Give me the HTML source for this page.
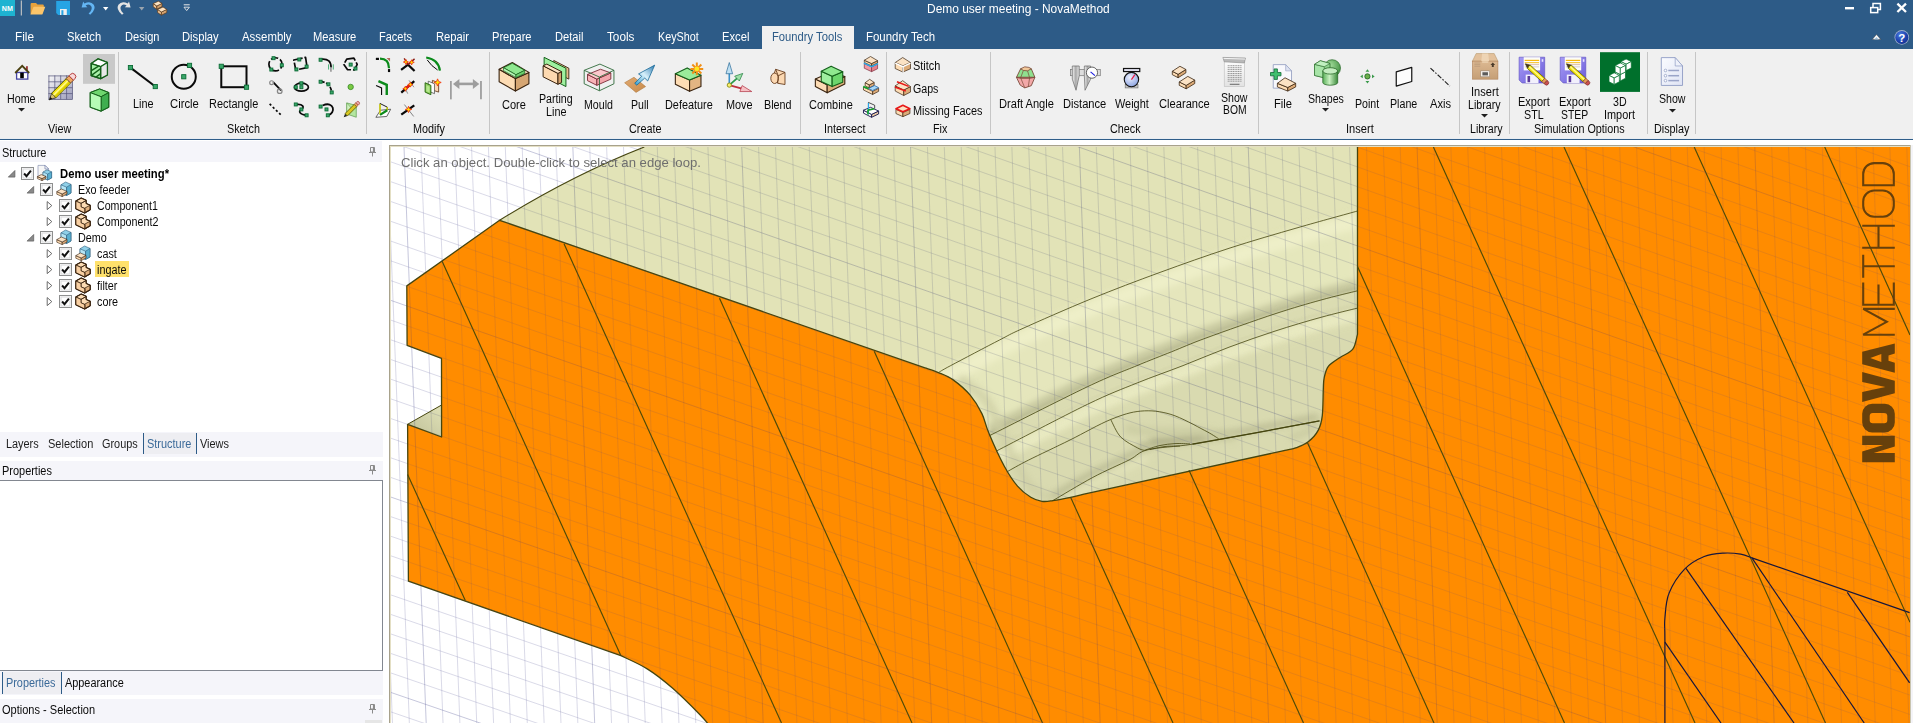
<!DOCTYPE html><html><head><meta charset="utf-8"><title>Demo user meeting - NovaMethod</title><style>
html,body{margin:0;padding:0;}
body{width:1913px;height:723px;overflow:hidden;background:#fff;position:relative;font-family:"Liberation Sans",sans-serif;font-size:12px;}
.t{position:absolute;white-space:nowrap;transform-origin:0 50%;display:block;}
.a{position:absolute;}
svg{position:absolute;overflow:visible;}
svg.vp{left:0;top:0;overflow:hidden;}
</style></head><body>
<div class="a" style="left:0;top:0;width:1913px;height:49px;background:#2d5b87"></div>
<div class="a" style="left:0;top:49px;width:1913px;height:89px;background:#f0f0f0"></div>
<div class="a" style="left:0;top:138px;width:1913px;height:1px;background:#e9edf2"></div>
<div class="a" style="left:0;top:139px;width:1913px;height:1px;background:#2f5d89"></div>
<span class="t" style="left:927.30px;top:1.00px;font-size:12px;line-height:16px;color:#fff;transform:scaleX(0.9962);">Demo user meeting - NovaMethod</span>
<span class="t" style="left:15.00px;top:29.40px;font-size:12px;line-height:16px;color:#fff;transform:scaleX(0.9822);">File</span>
<span class="t" style="left:66.90px;top:29.40px;font-size:12px;line-height:16px;color:#fff;transform:scaleX(0.9299);">Sketch</span>
<span class="t" style="left:124.50px;top:29.40px;font-size:12px;line-height:16px;color:#fff;transform:scaleX(0.9235);">Design</span>
<span class="t" style="left:182.30px;top:29.40px;font-size:12px;line-height:16px;color:#fff;transform:scaleX(0.9324);">Display</span>
<span class="t" style="left:241.50px;top:29.40px;font-size:12px;line-height:16px;color:#fff;transform:scaleX(0.9516);">Assembly</span>
<span class="t" style="left:313.00px;top:29.40px;font-size:12px;line-height:16px;color:#fff;transform:scaleX(0.9274);">Measure</span>
<span class="t" style="left:379.00px;top:29.40px;font-size:12px;line-height:16px;color:#fff;transform:scaleX(0.9167);">Facets</span>
<span class="t" style="left:436.00px;top:29.40px;font-size:12px;line-height:16px;color:#fff;transform:scaleX(0.9333);">Repair</span>
<span class="t" style="left:491.80px;top:29.40px;font-size:12px;line-height:16px;color:#fff;transform:scaleX(0.9253);">Prepare</span>
<span class="t" style="left:555.40px;top:29.40px;font-size:12px;line-height:16px;color:#fff;transform:scaleX(0.9255);">Detail</span>
<span class="t" style="left:607.20px;top:29.40px;font-size:12px;line-height:16px;color:#fff;transform:scaleX(0.9780);">Tools</span>
<span class="t" style="left:658.30px;top:29.40px;font-size:12px;line-height:16px;color:#fff;transform:scaleX(0.8998);">KeyShot</span>
<span class="t" style="left:722.20px;top:29.40px;font-size:12px;line-height:16px;color:#fff;transform:scaleX(0.9372);">Excel</span>
<span class="t" style="left:866.00px;top:29.40px;font-size:12px;line-height:16px;color:#fff;transform:scaleX(0.9521);">Foundry Tech</span>
<div class="a" style="left:762px;top:26px;width:92px;height:23px;background:#f0f0f0"></div>
<span class="t" style="left:772.00px;top:29.40px;font-size:12px;line-height:16px;color:#2d5b87;transform:scaleX(0.9356);">Foundry Tools</span>
<div class="a" style="left:118.0px;top:52px;width:1px;height:82px;background:#c6c6c6"></div>
<div class="a" style="left:366.0px;top:52px;width:1px;height:82px;background:#c6c6c6"></div>
<div class="a" style="left:489.0px;top:52px;width:1px;height:82px;background:#c6c6c6"></div>
<div class="a" style="left:800.0px;top:52px;width:1px;height:82px;background:#c6c6c6"></div>
<div class="a" style="left:886.0px;top:52px;width:1px;height:82px;background:#c6c6c6"></div>
<div class="a" style="left:989.9px;top:52px;width:1px;height:82px;background:#c6c6c6"></div>
<div class="a" style="left:1257.9px;top:52px;width:1px;height:82px;background:#c6c6c6"></div>
<div class="a" style="left:1458.7px;top:52px;width:1px;height:82px;background:#c6c6c6"></div>
<div class="a" style="left:1509.0px;top:52px;width:1px;height:82px;background:#c6c6c6"></div>
<div class="a" style="left:1647.1px;top:52px;width:1px;height:82px;background:#c6c6c6"></div>
<div class="a" style="left:1694.8px;top:52px;width:1px;height:82px;background:#c6c6c6"></div>
<span class="t" style="left:47.99px;top:121.00px;font-size:12px;line-height:16px;color:#0a0a0a;transform:scaleX(0.9000);">View</span>
<span class="t" style="left:227.10px;top:121.00px;font-size:12px;line-height:16px;color:#0a0a0a;transform:scaleX(0.9000);">Sketch</span>
<span class="t" style="left:413.30px;top:121.00px;font-size:12px;line-height:16px;color:#0a0a0a;transform:scaleX(0.9000);">Modify</span>
<span class="t" style="left:629.39px;top:121.00px;font-size:12px;line-height:16px;color:#0a0a0a;transform:scaleX(0.9000);">Create</span>
<span class="t" style="left:824.00px;top:121.00px;font-size:12px;line-height:16px;color:#0a0a0a;transform:scaleX(0.9000);">Intersect</span>
<span class="t" style="left:932.80px;top:121.00px;font-size:12px;line-height:16px;color:#0a0a0a;transform:scaleX(0.9000);">Fix</span>
<span class="t" style="left:1110.19px;top:121.00px;font-size:12px;line-height:16px;color:#0a0a0a;transform:scaleX(0.9000);">Check</span>
<span class="t" style="left:1345.85px;top:121.00px;font-size:12px;line-height:16px;color:#0a0a0a;transform:scaleX(0.9233);">Insert</span>
<span class="t" style="left:1469.95px;top:121.00px;font-size:12px;line-height:16px;color:#0a0a0a;transform:scaleX(0.8859);">Library</span>
<span class="t" style="left:1533.98px;top:121.00px;font-size:12px;line-height:16px;color:#0a0a0a;transform:scaleX(0.9000);">Simulation Options</span>
<span class="t" style="left:1654.29px;top:121.00px;font-size:12px;line-height:16px;color:#0a0a0a;transform:scaleX(0.9000);">Display</span>
<span class="t" style="left:7.15px;top:90.70px;font-size:12px;line-height:16px;color:#0a0a0a;transform:scaleX(0.8902);">Home</span>
<svg class="a" style="left:17.9px;top:108.0px" width="7" height="4" viewBox="0 0 7 4"><path d="M0,0H7L3.5,3.6Z" fill="#1e1e1e"/></svg>
<span class="t" style="left:132.95px;top:95.70px;font-size:12px;line-height:16px;color:#0a0a0a;transform:scaleX(0.9036);">Line</span>
<span class="t" style="left:169.90px;top:95.70px;font-size:12px;line-height:16px;color:#0a0a0a;transform:scaleX(0.9385);">Circle</span>
<span class="t" style="left:209.25px;top:95.70px;font-size:12px;line-height:16px;color:#0a0a0a;transform:scaleX(0.9124);">Rectangle</span>
<span class="t" style="left:501.85px;top:96.70px;font-size:12px;line-height:16px;color:#0a0a0a;transform:scaleX(0.9187);">Core</span>
<span class="t" style="left:584.30px;top:96.70px;font-size:12px;line-height:16px;color:#0a0a0a;transform:scaleX(0.8872);">Mould</span>
<span class="t" style="left:631.10px;top:96.70px;font-size:12px;line-height:16px;color:#0a0a0a;transform:scaleX(0.8793);">Pull</span>
<span class="t" style="left:665.25px;top:96.70px;font-size:12px;line-height:16px;color:#0a0a0a;transform:scaleX(0.9053);">Defeature</span>
<span class="t" style="left:726.00px;top:96.70px;font-size:12px;line-height:16px;color:#0a0a0a;transform:scaleX(0.9065);">Move</span>
<span class="t" style="left:764.05px;top:96.70px;font-size:12px;line-height:16px;color:#0a0a0a;transform:scaleX(0.8961);">Blend</span>
<span class="t" style="left:808.70px;top:96.70px;font-size:12px;line-height:16px;color:#0a0a0a;transform:scaleX(0.9119);">Combine</span>
<span class="t" style="left:539.45px;top:91.30px;font-size:12px;line-height:16px;color:#0a0a0a;transform:scaleX(0.8865);">Parting</span>
<span class="t" style="left:546.05px;top:103.90px;font-size:12px;line-height:16px;color:#0a0a0a;transform:scaleX(0.9036);">Line</span>
<span class="t" style="left:913.30px;top:57.60px;font-size:12px;line-height:16px;color:#0a0a0a;transform:scaleX(0.9100);">Stitch</span>
<span class="t" style="left:913.30px;top:80.70px;font-size:12px;line-height:16px;color:#0a0a0a;transform:scaleX(0.8859);">Gaps</span>
<span class="t" style="left:913.30px;top:103.40px;font-size:12px;line-height:16px;color:#0a0a0a;transform:scaleX(0.9063);">Missing Faces</span>
<span class="t" style="left:998.75px;top:95.70px;font-size:12px;line-height:16px;color:#0a0a0a;transform:scaleX(0.9249);">Draft Angle</span>
<span class="t" style="left:1063.05px;top:95.70px;font-size:12px;line-height:16px;color:#0a0a0a;transform:scaleX(0.9274);">Distance</span>
<span class="t" style="left:1115.00px;top:95.70px;font-size:12px;line-height:16px;color:#0a0a0a;transform:scaleX(0.9104);">Weight</span>
<span class="t" style="left:1159.00px;top:95.70px;font-size:12px;line-height:16px;color:#0a0a0a;transform:scaleX(0.9286);">Clearance</span>
<span class="t" style="left:1274.40px;top:95.70px;font-size:12px;line-height:16px;color:#0a0a0a;transform:scaleX(0.9305);">File</span>
<span class="t" style="left:1355.30px;top:95.70px;font-size:12px;line-height:16px;color:#0a0a0a;transform:scaleX(0.8850);">Point</span>
<span class="t" style="left:1389.95px;top:95.70px;font-size:12px;line-height:16px;color:#0a0a0a;transform:scaleX(0.8896);">Plane</span>
<span class="t" style="left:1429.50px;top:95.70px;font-size:12px;line-height:16px;color:#0a0a0a;transform:scaleX(0.9263);">Axis</span>
<span class="t" style="left:1221.05px;top:90.00px;font-size:12px;line-height:16px;color:#0a0a0a;transform:scaleX(0.8829);">Show</span>
<span class="t" style="left:1222.55px;top:102.40px;font-size:12px;line-height:16px;color:#0a0a0a;transform:scaleX(0.8599);">BOM</span>
<span class="t" style="left:1307.95px;top:90.70px;font-size:12px;line-height:16px;color:#0a0a0a;transform:scaleX(0.8823);">Shapes</span>
<svg class="a" style="left:1322.4px;top:108.0px" width="7" height="4" viewBox="0 0 7 4"><path d="M0,0H7L3.5,3.6Z" fill="#1e1e1e"/></svg>
<span class="t" style="left:1470.65px;top:83.70px;font-size:12px;line-height:16px;color:#0a0a0a;transform:scaleX(0.9233);">Insert</span>
<span class="t" style="left:1468.25px;top:96.70px;font-size:12px;line-height:16px;color:#0a0a0a;transform:scaleX(0.8859);">Library</span>
<svg class="a" style="left:1481.0px;top:114.0px" width="7" height="4" viewBox="0 0 7 4"><path d="M0,0H7L3.5,3.6Z" fill="#1e1e1e"/></svg>
<span class="t" style="left:1518.00px;top:94.30px;font-size:12px;line-height:16px;color:#0a0a0a;transform:scaleX(0.9172);">Export</span>
<span class="t" style="left:1524.10px;top:106.70px;font-size:12px;line-height:16px;color:#0a0a0a;transform:scaleX(0.8909);">STL</span>
<span class="t" style="left:1559.00px;top:94.30px;font-size:12px;line-height:16px;color:#0a0a0a;transform:scaleX(0.9172);">Export</span>
<span class="t" style="left:1561.35px;top:106.70px;font-size:12px;line-height:16px;color:#0a0a0a;transform:scaleX(0.8650);">STEP</span>
<span class="t" style="left:1612.90px;top:94.30px;font-size:12px;line-height:16px;color:#0a0a0a;transform:scaleX(0.8864);">3D</span>
<span class="t" style="left:1604.25px;top:106.70px;font-size:12px;line-height:16px;color:#0a0a0a;transform:scaleX(0.9088);">Import</span>
<span class="t" style="left:1658.75px;top:90.70px;font-size:12px;line-height:16px;color:#0a0a0a;transform:scaleX(0.8829);">Show</span>
<svg class="a" style="left:1668.5px;top:108.5px" width="7" height="4" viewBox="0 0 7 4"><path d="M0,0H7L3.5,3.6Z" fill="#1e1e1e"/></svg>
<div class="a" style="left:0;top:141px;width:382px;height:21px;background:#f5f5fa"></div>
<span class="t" style="left:1.80px;top:144.80px;font-size:12px;line-height:16px;color:#0a0a0a;transform:scaleX(0.9122);">Structure</span>
<svg class="a" style="left:367.9px;top:146.5px" width="9" height="10" viewBox="0 0 9 10"><path d="M2.5,0.5H6.5V5H2.5Z M1,5.5H8 M4.5,5.5V9.5" fill="none" stroke="#8a8a8a" stroke-width="1"/><path d="M5.5,0.5V5" stroke="#8a8a8a" stroke-width="1.2"/></svg>
<div class="a" style="left:0;top:432px;width:383px;height:25px;background:#f5f5fa"></div>
<div class="a" style="left:143px;top:433px;width:52px;height:21px;background:#eeeef2;border-left:1px solid #2d5b87;border-right:1px solid #2d5b87;box-sizing:content-box"></div>
<span class="t" style="left:6.30px;top:435.80px;font-size:12px;line-height:16px;color:#1e1e1e;transform:scaleX(0.9079);">Layers</span>
<span class="t" style="left:48.20px;top:435.80px;font-size:12px;line-height:16px;color:#1e1e1e;transform:scaleX(0.9178);">Selection</span>
<span class="t" style="left:102.30px;top:435.80px;font-size:12px;line-height:16px;color:#1e1e1e;transform:scaleX(0.9074);">Groups</span>
<span class="t" style="left:147.20px;top:435.80px;font-size:12px;line-height:16px;color:#3b6a99;transform:scaleX(0.9122);">Structure</span>
<span class="t" style="left:200.40px;top:435.80px;font-size:12px;line-height:16px;color:#1e1e1e;transform:scaleX(0.9120);">Views</span>
<div class="a" style="left:0;top:461px;width:383px;height:19px;background:#f5f5fa"></div>
<span class="t" style="left:1.80px;top:462.80px;font-size:12px;line-height:16px;color:#0a0a0a;transform:scaleX(0.9125);">Properties</span>
<svg class="a" style="left:367.9px;top:465.0px" width="9" height="10" viewBox="0 0 9 10"><path d="M2.5,0.5H6.5V5H2.5Z M1,5.5H8 M4.5,5.5V9.5" fill="none" stroke="#8a8a8a" stroke-width="1"/><path d="M5.5,0.5V5" stroke="#8a8a8a" stroke-width="1.2"/></svg>
<div class="a" style="left:-1px;top:480px;width:384px;height:191px;background:#fff;border:1px solid #828790;box-sizing:border-box"></div>
<div class="a" style="left:0;top:671px;width:383px;height:24px;background:#f5f5fa"></div>
<div class="a" style="left:2px;top:672px;width:58px;height:22px;background:#eeeef2;border-left:1px solid #2d5b87;border-right:1px solid #2d5b87;box-sizing:content-box"></div>
<span class="t" style="left:6.30px;top:675.30px;font-size:12px;line-height:16px;color:#3b6a99;transform:scaleX(0.9051);">Properties</span>
<span class="t" style="left:65.00px;top:675.30px;font-size:12px;line-height:16px;color:#0a0a0a;transform:scaleX(0.9072);">Appearance</span>
<div class="a" style="left:0;top:699px;width:383px;height:24px;background:#f5f5fa"></div>
<span class="t" style="left:1.80px;top:702.00px;font-size:12px;line-height:16px;color:#0a0a0a;transform:scaleX(0.9185);">Options - Selection</span>
<svg class="a" style="left:367.9px;top:703.5px" width="9" height="10" viewBox="0 0 9 10"><path d="M2.5,0.5H6.5V5H2.5Z M1,5.5H8 M4.5,5.5V9.5" fill="none" stroke="#8a8a8a" stroke-width="1"/><path d="M5.5,0.5V5" stroke="#8a8a8a" stroke-width="1.2"/></svg>
<div class="a" style="left:365px;top:720px;width:17px;height:3px;background:#e6e6e6"></div>
<span class="t" style="left:59.50px;top:165.80px;font-size:12px;line-height:16px;color:#000;font-weight:bold;transform:scaleX(0.9395);">Demo user meeting*</span>
<span class="t" style="left:78.30px;top:181.80px;font-size:12px;line-height:16px;color:#0a0a0a;transform:scaleX(0.8963);">Exo feeder</span>
<span class="t" style="left:97.00px;top:197.80px;font-size:12px;line-height:16px;color:#0a0a0a;transform:scaleX(0.8850);">Component1</span>
<span class="t" style="left:97.00px;top:213.80px;font-size:12px;line-height:16px;color:#0a0a0a;transform:scaleX(0.8937);">Component2</span>
<span class="t" style="left:78.30px;top:229.80px;font-size:12px;line-height:16px;color:#0a0a0a;transform:scaleX(0.9000);">Demo</span>
<span class="t" style="left:97.00px;top:245.80px;font-size:12px;line-height:16px;color:#0a0a0a;transform:scaleX(0.9000);">cast</span>
<div class="a" style="left:95px;top:261px;width:34px;height:16px;background:#ffe16b"></div>
<span class="t" style="left:97.00px;top:261.80px;font-size:12px;line-height:16px;color:#0a0a0a;transform:scaleX(0.9000);">ingate</span>
<span class="t" style="left:97.00px;top:277.80px;font-size:12px;line-height:16px;color:#0a0a0a;transform:scaleX(0.9000);">filter</span>
<span class="t" style="left:97.00px;top:293.80px;font-size:12px;line-height:16px;color:#0a0a0a;transform:scaleX(0.9000);">core</span>
<svg class="vp" width="1913" height="723" viewBox="0 0 1913 723"><defs><clipPath id="vc"><rect x="391" y="147" width="1519" height="576"/></clipPath><clipPath id="bc"><path d="M499.6,220.3 Q572.85,174.95 644.3,147 L644.3,140 L1358.5,140 L1358.5,520 L900,520 Z"/></clipPath><clipPath id="oc"><path d="M499.6,220.3 L406.8,285.9 L407.1,345.3 L441.5,358.4 L441.6,437 L407.6,424.3 L408.4,581.1 L620.9,655.7 C625.4,657.9 639.0,663.7 647.6,669.1 C656.2,674.5 664.0,680.7 672.7,688.3 C681.4,695.9 694.0,708.6 700.0,714.7 C706.0,720.8 707.5,723.3 709.0,725.0 L1915,725 L1915,140 L1357.5,140 L1357.5,334.3 C1356.7,336.8 1355.7,345.3 1352.8,349.2 C1349.9,353.1 1344.1,354.7 1340.1,357.5 C1336.0,360.3 1331.2,362.8 1328.5,366.2 C1325.8,369.6 1325.1,373.9 1324.2,377.8 C1323.3,381.7 1323.6,383.2 1323.3,389.5 C1323.0,395.8 1323.1,408.8 1322.3,415.6 C1321.5,422.4 1320.6,425.7 1318.3,430.1 C1316.0,434.5 1311.8,438.9 1308.2,441.8 C1304.6,444.7 1300.6,446.1 1296.6,447.6 C1292.6,449.1 1286.1,450.1 1284.0,450.6 L1084.0,494.2 C1081.8,494.7 1075.8,496.2 1070.6,497.3 C1065.4,498.4 1057.7,499.9 1052.9,500.6 C1048.1,501.3 1045.6,501.9 1041.9,501.3 C1038.2,500.8 1034.9,499.8 1030.8,497.3 C1026.7,494.8 1021.9,491.4 1017.5,486.2 C1013.1,481.0 1009.1,475.1 1004.3,466.3 C999.5,457.5 992.5,441.9 988.8,433.1 C985.1,424.3 985.0,419.9 981.9,413.6 C978.8,407.3 974.9,400.8 970.2,395.2 C965.5,389.6 958.8,383.9 953.5,380.1 C948.2,376.3 943.1,374.6 938.4,372.6 C933.6,370.6 927.2,368.7 925.0,367.9 Z"/></clipPath><clipPath id="bc2"><path d="M499.6,220.3 Q572.85,174.95 644.3,147 L644.3,140 L1358.5,140 L1358.5,520 L900,520 Z"/><path d="M407.6,424.3 L441.6,405 L441.6,437 Z"/></clipPath><filter id="b6" filterUnits="userSpaceOnUse" x="380" y="140" width="1540" height="590"><feGaussianBlur stdDeviation="6"/></filter><filter id="b2" filterUnits="userSpaceOnUse" x="380" y="140" width="1540" height="590"><feGaussianBlur stdDeviation="1.8"/></filter><filter id="b3" filterUnits="userSpaceOnUse" x="380" y="140" width="1540" height="590"><feGaussianBlur stdDeviation="3.2"/></filter><filter id="b10" filterUnits="userSpaceOnUse" x="380" y="140" width="1540" height="590"><feGaussianBlur stdDeviation="10"/></filter></defs><rect x="389.5" y="145.5" width="1521" height="580" fill="#fff" stroke="#a8a28c" stroke-width="1"/><rect x="390.5" y="146.5" width="1519" height="580" fill="none" stroke="#e4dfc4" stroke-width="1"/><g clip-path="url(#vc)"><path d="M353.35,147L375.63,723 M370.23,147L392.48,723 M387.12,147L409.33,723 M420.88,147L443.03,723 M437.77,147L459.88,723 M454.65,147L476.72,723 M471.54,147L493.57,723 M488.43,147L510.42,723 M505.31,147L527.27,723 M522.20,147L544.12,723 M539.08,147L560.97,723 M555.97,147L577.82,723 M589.74,147L611.52,723 M606.62,147L628.37,723 M623.50,147L645.22,723 M640.39,147L662.07,723 M657.28,147L678.92,723 M674.16,147L695.77,723 M691.05,147L712.62,723 M707.93,147L729.47,723 M724.82,147L746.32,723 M758.59,147L780.02,723 M775.47,147L796.87,723 M792.36,147L813.72,723 M809.24,147L830.57,723 M826.12,147L847.42,723 M843.01,147L864.26,723 M859.89,147L881.11,723 M876.78,147L897.96,723 M893.66,147L914.81,723 M927.44,147L948.51,723 M944.32,147L965.36,723 M961.21,147L982.21,723 M978.09,147L999.06,723 M994.98,147L1015.91,723 M1011.86,147L1032.76,723 M1028.74,147L1049.61,723 M1045.63,147L1066.46,723 M1062.52,147L1083.31,723 M1096.29,147L1117.01,723 M1113.17,147L1133.86,723 M1130.06,147L1150.71,723 M1146.94,147L1167.56,723 M1163.83,147L1184.41,723 M1180.71,147L1201.26,723 M1197.60,147L1218.11,723 M1214.48,147L1234.96,723 M1231.37,147L1251.81,723 M1265.14,147L1285.50,723 M1282.02,147L1302.35,723 M1298.91,147L1319.20,723 M1315.79,147L1336.05,723 M1332.68,147L1352.90,723 M1349.56,147L1369.75,723 M1366.45,147L1386.60,723 M1383.33,147L1403.45,723 M1400.22,147L1420.30,723 M1433.99,147L1454.00,723 M1450.87,147L1470.85,723 M1467.76,147L1487.70,723 M1484.64,147L1504.55,723 M1501.53,147L1521.40,723 M1518.41,147L1538.25,723 M1535.30,147L1555.10,723 M1552.18,147L1571.95,723 M1569.07,147L1588.80,723 M1602.84,147L1622.50,723 M1619.72,147L1639.35,723 M1636.61,147L1656.20,723 M1653.49,147L1673.04,723 M1670.38,147L1689.89,723 M1687.26,147L1706.74,723 M1704.15,147L1723.59,723 M1721.03,147L1740.44,723 M1737.92,147L1757.29,723 M1771.69,147L1790.99,723 M1788.57,147L1807.84,723 M1805.46,147L1824.69,723 M1822.34,147L1841.54,723 M1839.23,147L1858.39,723 M1856.11,147L1875.24,723 M1873.00,147L1892.09,723 M1889.88,147L1908.94,723 M1906.77,147L1925.79,723 M1940.54,147L1959.49,723 M1957.42,147L1976.34,723 M391,-887.32L1910,-331.20 M391,-866.80L1910,-311.12 M391,-846.29L1910,-291.05 M391,-825.80L1910,-271.00 M391,-805.32L1910,-250.96 M391,-784.85L1910,-230.93 M391,-764.40L1910,-210.92 M391,-743.96L1910,-190.92 M391,-723.53L1910,-170.94 M391,-682.72L1910,-131.00 M391,-662.33L1910,-111.06 M391,-641.96L1910,-91.13 M391,-621.60L1910,-71.21 M391,-601.26L1910,-51.30 M391,-580.93L1910,-31.41 M391,-560.61L1910,-11.53 M391,-540.30L1910,8.33 M391,-520.01L1910,28.18 M391,-479.46L1910,67.85 M391,-459.21L1910,87.66 M391,-438.97L1910,107.46 M391,-418.75L1910,127.24 M391,-398.54L1910,147.01 M391,-378.34L1910,166.77 M391,-358.15L1910,186.51 M391,-337.98L1910,206.24 M391,-317.82L1910,225.96 M391,-277.55L1910,265.36 M391,-257.43L1910,285.03 M391,-237.33L1910,304.70 M391,-217.24L1910,324.35 M391,-197.16L1910,343.99 M391,-177.09L1910,363.61 M391,-157.04L1910,383.22 M391,-137.00L1910,402.82 M391,-116.98L1910,422.40 M391,-76.97L1910,461.53 M391,-56.99L1910,481.07 M391,-37.02L1910,500.60 M391,-17.06L1910,520.12 M391,2.88L1910,539.62 M391,22.81L1910,559.11 M391,42.73L1910,578.59 M391,62.63L1910,598.05 M391,82.52L1910,617.50 M391,122.26L1910,656.36 M391,142.11L1910,675.77 M391,161.95L1910,695.16 M391,181.77L1910,714.55 M391,201.58L1910,733.92 M391,221.38L1910,753.27 M391,241.16L1910,772.61 M391,260.93L1910,791.94 M391,280.69L1910,811.26 M391,320.16L1910,849.85 M391,339.88L1910,869.13 M391,359.58L1910,888.39 M391,379.27L1910,907.64 M391,398.94L1910,926.87 M391,418.60L1910,946.09 M391,438.25L1910,965.30 M391,457.89L1910,984.50 M391,477.51L1910,1003.68 M391,516.72L1910,1042.00 M391,536.30L1910,1061.14 M391,555.87L1910,1080.27 M391,575.42L1910,1099.38 M391,594.96L1910,1118.49 M391,614.49L1910,1137.57 M391,634.01L1910,1156.65 M391,653.51L1910,1175.71 M391,673.00L1910,1194.76 M391,711.93L1910,1232.81 M391,731.38L1910,1251.82 M391,750.81L1910,1270.81" fill="none" stroke="#7578aa" stroke-opacity="0.27" stroke-width="1"/><path d="M404.00,147L426.18,723 M572.85,147L594.67,723 M741.70,147L763.17,723 M910.55,147L931.66,723 M1079.40,147L1100.16,723 M1248.25,147L1268.65,723 M1417.10,147L1437.15,723 M1585.95,147L1605.65,723 M1754.80,147L1774.14,723 M1923.65,147L1942.64,723 M391,-907.85L1910,-351.29 M391,-703.12L1910,-150.96 M391,-499.73L1910,48.02 M391,-297.68L1910,245.67 M391,-96.97L1910,441.97 M391,102.40L1910,636.94 M391,300.43L1910,830.56 M391,497.12L1910,1022.85 M391,692.47L1910,1213.79" fill="none" stroke="#6a6ca4" stroke-opacity="0.38" stroke-width="1"/><path d="M499.6,220.3 Q572.85,174.95 644.3,147 L644.3,140 L1358.5,140 L1358.5,520 L900,520 Z" fill="#E2E3B7"/><linearGradient id="ng" gradientUnits="userSpaceOnUse" x1="441" y1="405" x2="415" y2="436"><stop offset="0" stop-color="#e0e1b8"/><stop offset="1" stop-color="#c2c39b"/></linearGradient><path d="M407.6,424.3 L441.6,405 L441.6,437 Z" fill="url(#ng)"/><g clip-path="url(#bc)"><polygon points="925.0,379.5 938.4,372.6 950.7,365.6 999.5,340.0 1022.0,328.8 1091.0,298.9 1160.0,272.4 1229.0,248.3 1298.0,227.6 1357.5,211.0 1357.5,290.8 1321.0,300.0 1275.0,313.8 1206.0,338.0 1171.5,351.8 1137.0,365.6 1087.3,386.8 989.4,435.7" fill="#e6e7bd" filter="url(#b3)" opacity="0.90"/><path d="M925.0,389.5 C927.2,388.4 934.1,384.9 938.4,382.6 C942.7,380.3 940.5,381.0 950.7,375.6 C960.9,370.2 987.6,356.1 999.5,350.0 C1011.4,343.9 1006.8,345.7 1022.0,338.8 C1037.2,331.9 1068.0,318.3 1091.0,308.9 C1114.0,299.5 1137.0,290.8 1160.0,282.4 C1183.0,274.0 1206.0,265.8 1229.0,258.3 C1252.0,250.8 1276.6,243.8 1298.0,237.6 C1319.4,231.4 1347.6,223.8 1357.5,221.0" fill="none" stroke="#eeefc8" stroke-width="15.0" filter="url(#b3)" opacity="1.00" stroke-linecap="butt"/><path d="M989.4,429.7 C1005.7,421.6 1062.7,392.5 1087.3,380.8 C1111.9,369.1 1123.0,365.4 1137.0,359.6 C1151.0,353.8 1160.0,350.4 1171.5,345.8 C1183.0,341.2 1188.8,338.3 1206.0,332.0 C1223.2,325.7 1255.8,314.1 1275.0,307.8 C1294.2,301.5 1307.2,297.8 1321.0,294.0 C1334.8,290.2 1351.4,286.3 1357.5,284.8" fill="none" stroke="#c6c79e" stroke-width="10.0" filter="url(#b3)" opacity="1.00" stroke-linecap="butt"/><path d="M989.4,433.2 C1005.7,425.1 1062.7,396.0 1087.3,384.3 C1111.9,372.6 1123.0,368.9 1137.0,363.1 C1151.0,357.3 1160.0,353.9 1171.5,349.3 C1183.0,344.7 1188.8,341.8 1206.0,335.5 C1223.2,329.2 1255.8,317.6 1275.0,311.3 C1294.2,305.0 1307.2,301.3 1321.0,297.5 C1334.8,293.7 1351.4,289.8 1357.5,288.3" fill="none" stroke="#babb93" stroke-width="4.2" filter="url(#b2)" opacity="0.95" stroke-linecap="butt"/><polygon points="989.4,435.7 1087.3,386.8 1137.0,365.6 1171.5,351.8 1206.0,338.0 1275.0,313.8 1321.0,300.0 1357.5,290.8 1357.5,308.1 1321.0,317.3 1275.0,331.1 1229.0,347.2 1183.0,365.6 1137.0,383.0 1087.3,404.4 996.1,451.2" fill="#dbdcb2" filter="url(#b2)" opacity="0.95"/><path d="M996.1,448.7 C1011.3,440.9 1063.8,413.3 1087.3,401.9 C1110.8,390.5 1121.0,387.0 1137.0,380.5 C1153.0,374.0 1167.7,369.1 1183.0,363.1 C1198.3,357.1 1213.7,350.4 1229.0,344.7 C1244.3,338.9 1259.7,333.6 1275.0,328.6 C1290.3,323.6 1307.2,318.6 1321.0,314.8 C1334.8,311.0 1351.4,307.1 1357.5,305.6" fill="none" stroke="#d0d1a7" stroke-width="3.5" filter="url(#b2)" opacity="0.80" stroke-linecap="butt"/><path d="M996.1,459.2 C1011.3,451.4 1063.8,423.8 1087.3,412.4 C1110.8,401.0 1121.0,397.5 1137.0,391.0 C1153.0,384.5 1167.7,379.6 1183.0,373.6 C1198.3,367.6 1213.7,360.9 1229.0,355.2 C1244.3,349.4 1259.7,344.1 1275.0,339.1 C1290.3,334.1 1307.2,329.1 1321.0,325.3 C1334.8,321.5 1351.4,317.6 1357.5,316.1" fill="none" stroke="#e9eac2" stroke-width="13.0" filter="url(#b3)" opacity="0.95" stroke-linecap="butt"/><polygon points="996.1,465.2 1087.3,418.4 1137.0,397.0 1183.0,379.6 1229.0,361.2 1275.0,345.1 1321.0,331.3 1357.5,322.1 1362.5,520.0 980.0,520.0" fill="#d8d9af" filter="url(#b3)" opacity="0.85"/><path d="M959.0,378.0 C963.5,381.7 979.2,391.7 986.0,400.0 C992.8,408.3 995.0,417.3 1000.0,428.0 C1005.0,438.7 1010.3,453.7 1016.0,464.0 C1021.7,474.3 1026.8,484.0 1034.0,490.0 C1041.2,496.0 1054.8,498.3 1059.0,500.0" fill="none" stroke="#cdcea4" stroke-width="9.0" filter="url(#b3)" opacity="0.75" stroke-linecap="butt"/><path d="M1140.0,446.0 C1144.2,445.5 1155.0,444.2 1165.0,443.0 C1175.0,441.8 1185.8,441.2 1200.0,439.0 C1214.2,436.8 1230.3,433.7 1250.0,430.0 C1269.7,426.3 1306.7,419.2 1318.0,417.0" fill="none" stroke="#b9ba92" stroke-width="6.0" filter="url(#b3)" opacity="0.95" stroke-linecap="butt"/><path d="M1150.0,441.0 C1154.2,440.7 1165.8,439.8 1175.0,439.0 C1184.2,438.2 1200.0,436.5 1205.0,436.0" fill="none" stroke="#a7a882" stroke-width="6.0" filter="url(#b3)" opacity="0.90" stroke-linecap="butt"/><path d="M1125.0,428.0 C1129.2,428.7 1137.5,431.3 1150.0,432.0 C1162.5,432.7 1185.8,431.0 1200.0,432.0 C1214.2,433.0 1229.2,437.0 1235.0,438.0" fill="none" stroke="#cbcca2" stroke-width="10.0" filter="url(#b3)" opacity="0.80" stroke-linecap="butt"/><path d="M1052.9,496.6 C1059.6,492.7 1080.1,480.2 1092.8,473.4 C1105.5,466.6 1119.8,460.6 1129.0,456.0 C1138.2,451.4 1144.9,447.4 1148.1,445.7" fill="none" stroke="#bcbd95" stroke-width="7.0" filter="url(#b3)" opacity="0.95" stroke-linecap="butt"/><path d="M1052.9,507.6 C1059.6,503.7 1080.1,491.2 1092.8,484.4 C1105.5,477.6 1119.8,471.6 1129.0,467.0 C1138.2,462.4 1144.9,458.4 1148.1,456.7" fill="none" stroke="#e2e3ba" stroke-width="8.0" filter="url(#b3)" opacity="0.80" stroke-linecap="butt"/><path d="M1290.0,438.0 C1293.3,436.7 1305.3,433.3 1310.0,430.0 C1314.7,426.7 1316.7,420.0 1318.0,418.0" fill="none" stroke="#c9caa0" stroke-width="8.0" filter="url(#b3)" opacity="0.80" stroke-linecap="butt"/></g><g clip-path="url(#bc2)"><path d="M353.35,147L375.63,723 M370.23,147L392.48,723 M387.12,147L409.33,723 M420.88,147L443.03,723 M437.77,147L459.88,723 M454.65,147L476.72,723 M471.54,147L493.57,723 M488.43,147L510.42,723 M505.31,147L527.27,723 M522.20,147L544.12,723 M539.08,147L560.97,723 M555.97,147L577.82,723 M589.74,147L611.52,723 M606.62,147L628.37,723 M623.50,147L645.22,723 M640.39,147L662.07,723 M657.28,147L678.92,723 M674.16,147L695.77,723 M691.05,147L712.62,723 M707.93,147L729.47,723 M724.82,147L746.32,723 M758.59,147L780.02,723 M775.47,147L796.87,723 M792.36,147L813.72,723 M809.24,147L830.57,723 M826.12,147L847.42,723 M843.01,147L864.26,723 M859.89,147L881.11,723 M876.78,147L897.96,723 M893.66,147L914.81,723 M927.44,147L948.51,723 M944.32,147L965.36,723 M961.21,147L982.21,723 M978.09,147L999.06,723 M994.98,147L1015.91,723 M1011.86,147L1032.76,723 M1028.74,147L1049.61,723 M1045.63,147L1066.46,723 M1062.52,147L1083.31,723 M1096.29,147L1117.01,723 M1113.17,147L1133.86,723 M1130.06,147L1150.71,723 M1146.94,147L1167.56,723 M1163.83,147L1184.41,723 M1180.71,147L1201.26,723 M1197.60,147L1218.11,723 M1214.48,147L1234.96,723 M1231.37,147L1251.81,723 M1265.14,147L1285.50,723 M1282.02,147L1302.35,723 M1298.91,147L1319.20,723 M1315.79,147L1336.05,723 M1332.68,147L1352.90,723 M1349.56,147L1369.75,723 M1366.45,147L1386.60,723 M1383.33,147L1403.45,723 M1400.22,147L1420.30,723 M1433.99,147L1454.00,723 M1450.87,147L1470.85,723 M1467.76,147L1487.70,723 M1484.64,147L1504.55,723 M1501.53,147L1521.40,723 M1518.41,147L1538.25,723 M1535.30,147L1555.10,723 M1552.18,147L1571.95,723 M1569.07,147L1588.80,723 M1602.84,147L1622.50,723 M1619.72,147L1639.35,723 M1636.61,147L1656.20,723 M1653.49,147L1673.04,723 M1670.38,147L1689.89,723 M1687.26,147L1706.74,723 M1704.15,147L1723.59,723 M1721.03,147L1740.44,723 M1737.92,147L1757.29,723 M1771.69,147L1790.99,723 M1788.57,147L1807.84,723 M1805.46,147L1824.69,723 M1822.34,147L1841.54,723 M1839.23,147L1858.39,723 M1856.11,147L1875.24,723 M1873.00,147L1892.09,723 M1889.88,147L1908.94,723 M1906.77,147L1925.79,723 M1940.54,147L1959.49,723 M1957.42,147L1976.34,723 M391,-887.32L1910,-331.20 M391,-866.80L1910,-311.12 M391,-846.29L1910,-291.05 M391,-825.80L1910,-271.00 M391,-805.32L1910,-250.96 M391,-784.85L1910,-230.93 M391,-764.40L1910,-210.92 M391,-743.96L1910,-190.92 M391,-723.53L1910,-170.94 M391,-682.72L1910,-131.00 M391,-662.33L1910,-111.06 M391,-641.96L1910,-91.13 M391,-621.60L1910,-71.21 M391,-601.26L1910,-51.30 M391,-580.93L1910,-31.41 M391,-560.61L1910,-11.53 M391,-540.30L1910,8.33 M391,-520.01L1910,28.18 M391,-479.46L1910,67.85 M391,-459.21L1910,87.66 M391,-438.97L1910,107.46 M391,-418.75L1910,127.24 M391,-398.54L1910,147.01 M391,-378.34L1910,166.77 M391,-358.15L1910,186.51 M391,-337.98L1910,206.24 M391,-317.82L1910,225.96 M391,-277.55L1910,265.36 M391,-257.43L1910,285.03 M391,-237.33L1910,304.70 M391,-217.24L1910,324.35 M391,-197.16L1910,343.99 M391,-177.09L1910,363.61 M391,-157.04L1910,383.22 M391,-137.00L1910,402.82 M391,-116.98L1910,422.40 M391,-76.97L1910,461.53 M391,-56.99L1910,481.07 M391,-37.02L1910,500.60 M391,-17.06L1910,520.12 M391,2.88L1910,539.62 M391,22.81L1910,559.11 M391,42.73L1910,578.59 M391,62.63L1910,598.05 M391,82.52L1910,617.50 M391,122.26L1910,656.36 M391,142.11L1910,675.77 M391,161.95L1910,695.16 M391,181.77L1910,714.55 M391,201.58L1910,733.92 M391,221.38L1910,753.27 M391,241.16L1910,772.61 M391,260.93L1910,791.94 M391,280.69L1910,811.26 M391,320.16L1910,849.85 M391,339.88L1910,869.13 M391,359.58L1910,888.39 M391,379.27L1910,907.64 M391,398.94L1910,926.87 M391,418.60L1910,946.09 M391,438.25L1910,965.30 M391,457.89L1910,984.50 M391,477.51L1910,1003.68 M391,516.72L1910,1042.00 M391,536.30L1910,1061.14 M391,555.87L1910,1080.27 M391,575.42L1910,1099.38 M391,594.96L1910,1118.49 M391,614.49L1910,1137.57 M391,634.01L1910,1156.65 M391,653.51L1910,1175.71 M391,673.00L1910,1194.76 M391,711.93L1910,1232.81 M391,731.38L1910,1251.82 M391,750.81L1910,1270.81" fill="none" stroke="#75768a" stroke-opacity="0.25" stroke-width="1"/><path d="M404.00,147L426.18,723 M572.85,147L594.67,723 M741.70,147L763.17,723 M910.55,147L931.66,723 M1079.40,147L1100.16,723 M1248.25,147L1268.65,723 M1417.10,147L1437.15,723 M1585.95,147L1605.65,723 M1754.80,147L1774.14,723 M1923.65,147L1942.64,723 M391,-907.85L1910,-351.29 M391,-703.12L1910,-150.96 M391,-499.73L1910,48.02 M391,-297.68L1910,245.67 M391,-96.97L1910,441.97 M391,102.40L1910,636.94 M391,300.43L1910,830.56 M391,497.12L1910,1022.85 M391,692.47L1910,1213.79" fill="none" stroke="#6a6c88" stroke-opacity="0.36" stroke-width="1"/></g><path d="M499.6,220.3 L406.8,285.9 L407.1,345.3 L441.5,358.4 L441.6,437 L407.6,424.3 L408.4,581.1 L620.9,655.7 C625.4,657.9 639.0,663.7 647.6,669.1 C656.2,674.5 664.0,680.7 672.7,688.3 C681.4,695.9 694.0,708.6 700.0,714.7 C706.0,720.8 707.5,723.3 709.0,725.0 L1915,725 L1915,140 L1357.5,140 L1357.5,334.3 C1356.7,336.8 1355.7,345.3 1352.8,349.2 C1349.9,353.1 1344.1,354.7 1340.1,357.5 C1336.0,360.3 1331.2,362.8 1328.5,366.2 C1325.8,369.6 1325.1,373.9 1324.2,377.8 C1323.3,381.7 1323.6,383.2 1323.3,389.5 C1323.0,395.8 1323.1,408.8 1322.3,415.6 C1321.5,422.4 1320.6,425.7 1318.3,430.1 C1316.0,434.5 1311.8,438.9 1308.2,441.8 C1304.6,444.7 1300.6,446.1 1296.6,447.6 C1292.6,449.1 1286.1,450.1 1284.0,450.6 L1084.0,494.2 C1081.8,494.7 1075.8,496.2 1070.6,497.3 C1065.4,498.4 1057.7,499.9 1052.9,500.6 C1048.1,501.3 1045.6,501.9 1041.9,501.3 C1038.2,500.8 1034.9,499.8 1030.8,497.3 C1026.7,494.8 1021.9,491.4 1017.5,486.2 C1013.1,481.0 1009.1,475.1 1004.3,466.3 C999.5,457.5 992.5,441.9 988.8,433.1 C985.1,424.3 985.0,419.9 981.9,413.6 C978.8,407.3 974.9,400.8 970.2,395.2 C965.5,389.6 958.8,383.9 953.5,380.1 C948.2,376.3 943.1,374.6 938.4,372.6 C933.6,370.6 927.2,368.7 925.0,367.9 Z" fill="#FF8C00"/><g fill="none" stroke="#45450f" stroke-width="0.8" clip-path="url(#bc)"><path d="M938.4,372.6 C940.5,371.4 940.5,371.0 950.7,365.6 C960.9,360.2 987.6,346.1 999.5,340.0 C1011.4,333.9 1006.8,335.7 1022.0,328.8 C1037.2,321.9 1068.0,308.3 1091.0,298.9 C1114.0,289.5 1137.0,280.8 1160.0,272.4 C1183.0,264.0 1206.0,255.8 1229.0,248.3 C1252.0,240.8 1276.6,233.8 1298.0,227.6 C1319.4,221.4 1347.6,213.8 1357.5,211.0"/><path d="M989.4,435.7 C1005.7,427.6 1062.7,398.5 1087.3,386.8 C1111.9,375.1 1123.0,371.4 1137.0,365.6 C1151.0,359.8 1160.0,356.4 1171.5,351.8 C1183.0,347.2 1188.8,344.3 1206.0,338.0 C1223.2,331.7 1255.8,320.1 1275.0,313.8 C1294.2,307.5 1307.2,303.8 1321.0,300.0 C1334.8,296.2 1351.4,292.3 1357.5,290.8"/><path d="M996.1,451.2 C1011.3,443.4 1063.8,415.8 1087.3,404.4 C1110.8,393.0 1121.0,389.5 1137.0,383.0 C1153.0,376.5 1167.7,371.6 1183.0,365.6 C1198.3,359.6 1213.7,352.9 1229.0,347.2 C1244.3,341.4 1259.7,336.1 1275.0,331.1 C1290.3,326.1 1307.2,321.1 1321.0,317.3 C1334.8,313.5 1351.4,309.6 1357.5,308.1"/><path d="M1007.5,471.5 C1011.0,469.6 1018.3,465.2 1028.7,460.0 C1039.1,454.8 1056.3,446.8 1070.0,440.0 C1083.7,433.2 1098.9,424.3 1110.7,419.5 C1122.5,414.7 1130.8,412.0 1140.8,411.1 C1150.8,410.2 1160.3,411.2 1170.9,414.4 C1181.5,417.6 1196.5,426.2 1204.4,430.3 C1212.4,434.4 1216.2,437.3 1218.6,438.7"/><path d="M1110.7,419.5 C1112.4,422.4 1116.2,432.3 1120.7,437.0 C1125.2,441.7 1133.6,445.7 1137.5,447.9 C1141.4,450.1 1143.1,450.0 1144.2,450.4"/><path d="M1052.9,500.6 C1059.6,496.7 1080.1,484.2 1092.8,477.4 C1105.5,470.6 1119.8,464.6 1129.0,460.0 C1138.2,455.4 1137.5,452.3 1148.1,449.7 C1158.7,447.1 1174.7,447.0 1192.4,444.2 C1210.1,441.4 1233.1,437.0 1254.3,433.1 C1275.5,429.2 1308.6,422.9 1319.5,420.9"/><path d="M1144.2,450.4 C1146.8,449.6 1154.9,446.6 1160.0,445.5 C1165.1,444.4 1170.0,443.9 1175.0,443.6 C1180.0,443.3 1187.5,443.8 1190.0,443.9"/><path d="M1150.0,449.5 C1152.5,449.0 1160.0,447.1 1165.0,446.5 C1170.0,445.9 1177.5,446.1 1180.0,446.0"/></g><path d="M1192.4,444.2 L1254.3,433.1 L1319.5,420.9" fill="none" stroke="#45450f" stroke-width="1.3" clip-path="url(#bc)"/><g fill="none" stroke="#4c4a08" stroke-width="1.15"><polyline points="407.6,474.5 465.3,600.4"/><polyline points="441.9,260.8 620.9,655.7"/><polyline points="564.0,243.7 781.5,723.0"/><polyline points="719.5,298.2 912.0,723.0"/><polyline points="874.2,351.2 1042.5,723.0"/><polyline points="1070.6,497.3 1173.0,723.0"/><polyline points="1189.0,470.3 1303.5,723.0"/><polyline points="1307.4,442.5 1434.0,723.0"/><polyline points="1357.5,266.5 1564.5,723.0"/><polyline points="1433.4,147.0 1695.0,723.0"/><polyline points="1564.0,147.0 1825.5,723.0"/><polyline points="1694.2,147.0 1910.0,622.3"/><polyline points="1824.7,147.0 1910.0,334.9"/></g><path d="M709.0,725.0 C707.5,723.3 706.0,720.8 700.0,714.7 C694.0,708.6 681.4,695.9 672.7,688.3 C664.0,680.7 656.2,674.5 647.6,669.1 C639.0,663.7 625.4,657.9 620.9,655.7 L408.4,581.1 L407.6,424.3 L441.6,437 L441.5,358.4 L407.1,345.3 L406.8,285.9 L499.6,220.3 L925.0,367.9 C927.2,368.7 933.6,370.6 938.4,372.6 C943.1,374.6 948.2,376.3 953.5,380.1 C958.8,383.9 965.5,389.6 970.2,395.2 C974.9,400.8 978.8,407.3 981.9,413.6 C985.0,419.9 985.1,424.3 988.8,433.1 C992.5,441.9 999.5,457.5 1004.3,466.3 C1009.1,475.1 1013.1,481.0 1017.5,486.2 C1021.9,491.4 1026.7,494.8 1030.8,497.3 C1034.9,499.8 1038.2,500.8 1041.9,501.3 C1045.6,501.9 1048.1,501.3 1052.9,500.6 C1057.7,499.9 1065.4,498.4 1070.6,497.3 C1075.8,496.2 1081.8,494.7 1084.0,494.2 L1284.0,450.6 C1286.1,450.1 1292.6,449.1 1296.6,447.6 C1300.6,446.1 1304.6,444.7 1308.2,441.8 C1311.8,438.9 1316.0,434.5 1318.3,430.1 C1320.6,425.7 1321.5,422.4 1322.3,415.6 C1323.1,408.8 1323.0,395.8 1323.3,389.5 C1323.6,383.2 1323.3,381.7 1324.2,377.8 C1325.1,373.9 1325.8,369.6 1328.5,366.2 C1331.2,362.8 1336.0,360.3 1340.1,357.5 C1344.1,354.7 1349.9,353.1 1352.8,349.2 C1355.7,345.3 1356.7,336.8 1357.5,334.3 L1357.5,140" fill="none" stroke="#45450f" stroke-width="1.3" stroke-linejoin="round"/><path d="M499.6,220.3 Q572.85,174.95 644.3,147" fill="none" stroke="#45450f" stroke-width="1.15"/><path d="M407.6,424.3 L441.6,405" fill="none" stroke="#45450f" stroke-width="1"/><g fill="none" stroke="#16163c" stroke-width="1.2"><path d="M1664.9,725.0 C1664.9,710.8 1664.9,657.8 1664.9,640.0 C1664.9,622.2 1664.2,626.0 1664.9,618.2 C1665.6,610.4 1665.8,601.2 1669.1,593.0 C1672.4,584.8 1678.8,575.2 1684.6,569.1 C1690.4,563.0 1697.7,559.2 1704.2,556.5 C1710.7,553.8 1717.7,553.5 1723.8,553.1 C1729.9,552.7 1736.0,553.4 1740.7,554.2 C1745.4,555.0 1750.0,557.3 1751.9,557.9 L1909.6,612.6"/><polyline points="1664.9,642.1 1721.0,723.0"/><polyline points="1686.0,568.3 1794.0,723.0"/><polyline points="1751.9,557.9 1864.2,723.0"/><polyline points="1847.3,592.4 1909.6,682.8"/></g><g clip-path="url(#oc)"><path d="M353.35,147L375.63,723 M370.23,147L392.48,723 M387.12,147L409.33,723 M420.88,147L443.03,723 M437.77,147L459.88,723 M454.65,147L476.72,723 M471.54,147L493.57,723 M488.43,147L510.42,723 M505.31,147L527.27,723 M522.20,147L544.12,723 M539.08,147L560.97,723 M555.97,147L577.82,723 M589.74,147L611.52,723 M606.62,147L628.37,723 M623.50,147L645.22,723 M640.39,147L662.07,723 M657.28,147L678.92,723 M674.16,147L695.77,723 M691.05,147L712.62,723 M707.93,147L729.47,723 M724.82,147L746.32,723 M758.59,147L780.02,723 M775.47,147L796.87,723 M792.36,147L813.72,723 M809.24,147L830.57,723 M826.12,147L847.42,723 M843.01,147L864.26,723 M859.89,147L881.11,723 M876.78,147L897.96,723 M893.66,147L914.81,723 M927.44,147L948.51,723 M944.32,147L965.36,723 M961.21,147L982.21,723 M978.09,147L999.06,723 M994.98,147L1015.91,723 M1011.86,147L1032.76,723 M1028.74,147L1049.61,723 M1045.63,147L1066.46,723 M1062.52,147L1083.31,723 M1096.29,147L1117.01,723 M1113.17,147L1133.86,723 M1130.06,147L1150.71,723 M1146.94,147L1167.56,723 M1163.83,147L1184.41,723 M1180.71,147L1201.26,723 M1197.60,147L1218.11,723 M1214.48,147L1234.96,723 M1231.37,147L1251.81,723 M1265.14,147L1285.50,723 M1282.02,147L1302.35,723 M1298.91,147L1319.20,723 M1315.79,147L1336.05,723 M1332.68,147L1352.90,723 M1349.56,147L1369.75,723 M1366.45,147L1386.60,723 M1383.33,147L1403.45,723 M1400.22,147L1420.30,723 M1433.99,147L1454.00,723 M1450.87,147L1470.85,723 M1467.76,147L1487.70,723 M1484.64,147L1504.55,723 M1501.53,147L1521.40,723 M1518.41,147L1538.25,723 M1535.30,147L1555.10,723 M1552.18,147L1571.95,723 M1569.07,147L1588.80,723 M1602.84,147L1622.50,723 M1619.72,147L1639.35,723 M1636.61,147L1656.20,723 M1653.49,147L1673.04,723 M1670.38,147L1689.89,723 M1687.26,147L1706.74,723 M1704.15,147L1723.59,723 M1721.03,147L1740.44,723 M1737.92,147L1757.29,723 M1771.69,147L1790.99,723 M1788.57,147L1807.84,723 M1805.46,147L1824.69,723 M1822.34,147L1841.54,723 M1839.23,147L1858.39,723 M1856.11,147L1875.24,723 M1873.00,147L1892.09,723 M1889.88,147L1908.94,723 M1906.77,147L1925.79,723 M1940.54,147L1959.49,723 M1957.42,147L1976.34,723 M391,-887.32L1910,-331.20 M391,-866.80L1910,-311.12 M391,-846.29L1910,-291.05 M391,-825.80L1910,-271.00 M391,-805.32L1910,-250.96 M391,-784.85L1910,-230.93 M391,-764.40L1910,-210.92 M391,-743.96L1910,-190.92 M391,-723.53L1910,-170.94 M391,-682.72L1910,-131.00 M391,-662.33L1910,-111.06 M391,-641.96L1910,-91.13 M391,-621.60L1910,-71.21 M391,-601.26L1910,-51.30 M391,-580.93L1910,-31.41 M391,-560.61L1910,-11.53 M391,-540.30L1910,8.33 M391,-520.01L1910,28.18 M391,-479.46L1910,67.85 M391,-459.21L1910,87.66 M391,-438.97L1910,107.46 M391,-418.75L1910,127.24 M391,-398.54L1910,147.01 M391,-378.34L1910,166.77 M391,-358.15L1910,186.51 M391,-337.98L1910,206.24 M391,-317.82L1910,225.96 M391,-277.55L1910,265.36 M391,-257.43L1910,285.03 M391,-237.33L1910,304.70 M391,-217.24L1910,324.35 M391,-197.16L1910,343.99 M391,-177.09L1910,363.61 M391,-157.04L1910,383.22 M391,-137.00L1910,402.82 M391,-116.98L1910,422.40 M391,-76.97L1910,461.53 M391,-56.99L1910,481.07 M391,-37.02L1910,500.60 M391,-17.06L1910,520.12 M391,2.88L1910,539.62 M391,22.81L1910,559.11 M391,42.73L1910,578.59 M391,62.63L1910,598.05 M391,82.52L1910,617.50 M391,122.26L1910,656.36 M391,142.11L1910,675.77 M391,161.95L1910,695.16 M391,181.77L1910,714.55 M391,201.58L1910,733.92 M391,221.38L1910,753.27 M391,241.16L1910,772.61 M391,260.93L1910,791.94 M391,280.69L1910,811.26 M391,320.16L1910,849.85 M391,339.88L1910,869.13 M391,359.58L1910,888.39 M391,379.27L1910,907.64 M391,398.94L1910,926.87 M391,418.60L1910,946.09 M391,438.25L1910,965.30 M391,457.89L1910,984.50 M391,477.51L1910,1003.68 M391,516.72L1910,1042.00 M391,536.30L1910,1061.14 M391,555.87L1910,1080.27 M391,575.42L1910,1099.38 M391,594.96L1910,1118.49 M391,614.49L1910,1137.57 M391,634.01L1910,1156.65 M391,653.51L1910,1175.71 M391,673.00L1910,1194.76 M391,711.93L1910,1232.81 M391,731.38L1910,1251.82 M391,750.81L1910,1270.81" fill="none" stroke="#785168" stroke-opacity="0.17" stroke-width="1"/><path d="M404.00,147L426.18,723 M572.85,147L594.67,723 M741.70,147L763.17,723 M910.55,147L931.66,723 M1079.40,147L1100.16,723 M1248.25,147L1268.65,723 M1417.10,147L1437.15,723 M1585.95,147L1605.65,723 M1754.80,147L1774.14,723 M1923.65,147L1942.64,723 M391,-907.85L1910,-351.29 M391,-703.12L1910,-150.96 M391,-499.73L1910,48.02 M391,-297.68L1910,245.67 M391,-96.97L1910,441.97 M391,102.40L1910,636.94 M391,300.43L1910,830.56 M391,497.12L1910,1022.85 M391,692.47L1910,1213.79" fill="none" stroke="#6a4560" stroke-opacity="0.25" stroke-width="1"/></g><g transform="translate(1894.8,462.3) rotate(-90)" fill="#5c3b0c" stroke="none" opacity="0.93"><polygon points="0.0,0.0 0.0,-32.6 10.7,-32.6 17.3,-11.5 17.3,-32.6 26.5,-32.6 26.5,0.0 15.8,0.0 9.2,-21.0 9.2,0.0"/><path fill-rule="evenodd" d="M29.8,-22.6 a10.0,10.0 0 0 1 10.0,-10.0 h8.8 a10.0,10.0 0 0 1 10.0,10.0 v12.6 a10.0,10.0 0 0 1 -10.0,10.0 h-8.8 a10.0,10.0 0 0 1 -10.0,-10.0 z M39.0,-22.1 a3,3 0 0 1 3,-3 h4.4 a3,3 0 0 1 3,3 v11.6 a3,3 0 0 1 -3,3 h-4.4 a3,3 0 0 1 -3,-3 z"/><polygon points="60.2,-32.6 70.4,-32.6 75.3,-9.5 80.2,-32.6 90.4,-32.6 81.6,0.0 69.0,0.0"/><path fill-rule="evenodd" d="M89.6,0 L98.0,-32.6 L110.5,-32.6 L118.9,0 L108.9,0 L106.9,-6.3 L101.6,-6.3 L99.6,0 Z M100.3,-13.5 L104.2,-24.5 L108.2,-13.5 Z"/></g><g transform="translate(1894.8,462.3) rotate(-90)" fill="none" stroke="#5c3b0c" stroke-width="2.1" opacity="0.93" stroke-linejoin="miter"><path d="M127.6,0 V-31.6 L140.5,-8.0 L153.4,-31.6 V0"/><path d="M179.7,-1 H157.5 V-31.6 H179.7 M157.5,-16.3 H177.7"/><path d="M184.5,-31.6 H207.5 M196.0,-31.6 V0"/><path d="M214.6,0 V-32.6 M236.6,0 V-32.6 M214.6,-16.3 H236.6"/><rect x="245.6" y="-31.6" width="26.2" height="30.6" rx="11.0" ry="11.0"/><path d="M277.0,-1 V-31.6 H288.2 a11.0,11.0 0 0 1 11.0,11.0 V-12.0 a11.0,11.0 0 0 1 -11.0,11.0 Z"/></g></g><rect x="1910" y="145" width="1" height="580" fill="#c8c4b0"/><rect x="1911" y="145" width="2" height="580" fill="#f4f4f8"/></svg>
<span class="t" style="left:401.20px;top:153.80px;font-size:13px;line-height:17px;color:#6e6e6e;transform:scaleX(1.0098);">Click an object. Double-click to select an edge loop.</span>
<svg class="a" style="left:0;top:0" width="1913" height="723" viewBox="0 0 1913 723"><rect x="0.00" y="0.00" width="15.00" height="16.00" fill="#1eb3d1" /><text x="7.3" y="10.8" font-family="Liberation Sans" font-weight="bold" font-size="7.6" fill="#fff" text-anchor="middle" textLength="11" lengthAdjust="spacingAndGlyphs">NM</text><rect x="20.80" y="0.50" width="1.00" height="15.00" fill="#d8d3cd" /><path d="M30.6,14.4 V4.2 q0,-1.2 1.2,-1.2 h4.2 l1.5,1.6 h5.3 q1,0 1,1 V7" fill="#e7a23c" /><path d="M30.6,14.6 L33.2,7.6 q0.3,-0.8 1.2,-0.8 H45.3 L42.6,14 q-0.2,0.6 -1,0.6 Z" fill="#fbc56a" /><path d="M56.2,1 H70 V15 H58.2 L56.2,13 Z" fill="#27a4e4" /><rect x="60.00" y="9.00" width="6.80" height="6.00" fill="#efefef" /><rect x="61.40" y="10.20" width="2.00" height="4.80" fill="#27a4e4" /><path d="M83.2,1.6 L81.6,7.6 L87.4,7.2 L85.6,5.6 Q89.2,3.2 91.4,6.4 Q92.8,9.4 88.6,13.6 L90.2,14.8 Q96.6,9.2 93.8,4.8 Q90.4,0.2 84.4,3.6 Z" fill="#64b6f4" /><path d="M103,7 H108.4 L105.7,10.4 Z" fill="#fff" /><path d="M129,1.6 L130.6,7.6 L124.8,7.2 L126.6,5.6 Q123,3.2 120.8,6.4 Q119.4,9.4 123.6,13.6 L122,14.8 Q115.6,9.2 118.4,4.8 Q121.8,0.2 127.8,3.6 Z" fill="#e4e4e4" /><path d="M139,7 H144.4 L141.7,10.4 Z" fill="#9aa4ae" /><polygon points="153.20,3.60 156.80,6.00 156.80,9.20 153.20,6.80" fill="#eec395" stroke="#5a3a1a" stroke-width="0.7" stroke-linejoin="round" /><polygon points="156.80,6.00 162.00,3.40 162.00,6.60 156.80,9.20" fill="#d3a26f" stroke="#5a3a1a" stroke-width="0.7" stroke-linejoin="round" /><polygon points="153.20,3.60 158.40,1.20 162.00,3.40 156.80,6.00" fill="#fde3c2" stroke="#5a3a1a" stroke-width="0.7" stroke-linejoin="round" /><polygon points="157.60,9.40 161.40,12.00 161.40,15.20 157.60,12.60" fill="#eec395" stroke="#5a3a1a" stroke-width="0.7" stroke-linejoin="round" /><polygon points="161.40,12.00 166.80,9.40 166.80,12.60 161.40,15.20" fill="#d3a26f" stroke="#5a3a1a" stroke-width="0.7" stroke-linejoin="round" /><polygon points="157.60,9.40 163.00,7.00 166.80,9.40 161.40,12.00" fill="#fde3c2" stroke="#5a3a1a" stroke-width="0.7" stroke-linejoin="round" /><rect x="183.70" y="4.30" width="6.00" height="1.00" fill="#e8e8e8" /><path d="M184,7.2 H189.4 L186.7,10.6 Z" fill="none" stroke="#e8e8e8" stroke-width="0.9" /><rect x="1845.00" y="7.00" width="9.00" height="2.40" fill="#fff" /><path d="M1873,7 V3.6 H1880.4 V9.4 H1878" fill="none" stroke="#fff" stroke-width="1.5" /><rect x="1870.70" y="7.60" width="7.00" height="5.00" fill="none" stroke="#fff" stroke-width="1.5" /><path d="M1897.4,3.6 L1906,12 M1906,3.6 L1897.4,12" fill="none" stroke="#fff" stroke-width="2.3" /><path d="M1872.2,39.4 L1876.5,34.6 L1880.8,39.4 Z" fill="#fff" stroke="#3a3a3a" stroke-width="0.5" /><path d="M1874.2,39.4 L1876.5,36.9 L1878.8,39.4 Z" fill="#9fc0dc" /><defs><radialGradient id="hg" cx="0.38" cy="0.3" r="0.85"><stop offset="0" stop-color="#4a7ae0"/><stop offset="0.55" stop-color="#1e44b0"/><stop offset="1" stop-color="#122c88"/></radialGradient></defs><circle cx="1901.80" cy="37.40" r="7.30" fill="#9fb0cc" /><circle cx="1901.80" cy="37.40" r="6.50" fill="url(#hg)" /><text x="1901.8" y="41.7" font-family="Liberation Sans" font-weight="bold" font-size="11.5" fill="#fff" text-anchor="middle">?</text><rect x="16.60" y="72.50" width="11.20" height="6.60" fill="#fff" stroke="#4545a5" stroke-width="1.3" /><rect x="20.20" y="72.60" width="3.60" height="5.60" fill="#000" /><rect x="26.20" y="66.20" width="1.50" height="4.50" fill="#8a1010" /><path d="M15.2,73 L22.2,65.8 L29.2,73" fill="none" stroke="#4a4010" stroke-width="1.8" stroke-linejoin="miter"/><defs><linearGradient id="sg" x1="0" y1="0" x2="1" y2="1"><stop offset="0" stop-color="#fafafa"/><stop offset="1" stop-color="#9a9ab8"/></linearGradient></defs><rect x="48.40" y="75.40" width="24.00" height="24.00" fill="url(#sg)" /><path d="M48.9,75.4V99.4M48.4,75.9H72.4M54.8,75.4V99.4M48.4,81.8H72.4M60.7,75.4V99.4M48.4,87.7H72.4M66.6,75.4V99.4M48.4,93.6H72.4M72.5,75.4V99.4M48.4,99.5H72.4" fill="none" stroke="#55557a" stroke-width="0.9" stroke-opacity="0.8"/><g transform="translate(49.3,99.9) rotate(-45)"><path d="M0,0 L6.4,-3.1 L6.4,3.1 Z" fill="#d8c070" stroke="#222" stroke-width="0.7" /><path d="M0,0 L2.8,-1.35 L2.8,1.35 Z" fill="#111" /><rect x="6.40" y="-3.10" width="20.60" height="6.20" fill="#f2e212" stroke="#4a4a00" stroke-width="0.9" /><rect x="6.40" y="-1.20" width="20.60" height="1.60" fill="#fff98a" /><rect x="6.40" y="1.20" width="20.60" height="1.90" fill="#d8c800" /><rect x="27.00" y="-3.10" width="4.00" height="6.20" fill="#f0a860" stroke="#7a4a20" stroke-width="0.8" /><path d="M31,-3.1 h2 a3.1,3.1 0 0 1 0,6.2 h-2 Z" fill="#f8d8d8" stroke="#b03030" stroke-width="0.9" /></g><rect x="83.00" y="54.00" width="32.00" height="29.80" fill="#c9c9c9" /><polygon points="91.29,63.56 98.03,58.89 107.37,62.52 107.37,74.97 100.62,78.60 91.29,75.49" fill="#b6f5b6" stroke="#14601a" stroke-width="1.4" stroke-linejoin="round" /><polygon points="91.29,63.56 98.03,58.89 107.37,62.52 100.62,66.67" fill="#fff" stroke="#14601a" stroke-width="1.2" stroke-linejoin="round" /><polygon points="100.62,66.67 107.37,62.52 107.37,74.97 100.62,78.60" fill="#e8e8e8" stroke="#14601a" stroke-width="1.2" stroke-linejoin="round" /><polygon points="91.29,63.56 100.62,66.67 100.62,78.60 91.29,75.49" fill="#a8f0a8" stroke="#14601a" stroke-width="1.4" stroke-linejoin="round" /><polyline points="91.80,70.30 98.55,66.15" fill="none" stroke="#14601a" stroke-width="1.5" /><polyline points="91.80,75.18 100.41,68.75" fill="none" stroke="#14601a" stroke-width="1.5" /><polyline points="95.95,77.05 100.41,73.93" fill="none" stroke="#14601a" stroke-width="1.5" /><polygon points="90.25,92.61 99.59,88.98 108.71,92.61 108.71,107.13 101.14,111.07 90.25,107.13" fill="#b0f5b0" stroke="#14601a" stroke-width="1.2" stroke-linejoin="round" /><polygon points="90.25,92.61 99.59,88.98 108.71,92.61 101.14,96.76" fill="#6fd66f" stroke="#14601a" stroke-width="1.0" stroke-linejoin="round" /><polygon points="101.14,96.76 108.71,92.61 108.71,107.13 101.14,111.07" fill="#3fae4f" stroke="#14601a" stroke-width="1.0" stroke-linejoin="round" /><polygon points="90.25,92.61 101.14,96.76 101.14,111.07 90.25,107.13" fill="#b6fbb6" stroke="#14601a" stroke-width="1.0" stroke-linejoin="round" /><polyline points="130.45,67.60 155.28,86.55" fill="none" stroke="#0a0a0a" stroke-width="2" /><rect x="128.35" y="65.50" width="4.20" height="4.20" fill="#3aa76a" stroke="#0b6b35" stroke-width="0.9" /><rect x="153.18" y="84.45" width="4.20" height="4.20" fill="#3aa76a" stroke="#0b6b35" stroke-width="0.9" /><circle cx="183.77" cy="76.75" r="12.00" fill="none" stroke="#0a0a0a" stroke-width="2" /><rect x="181.67" y="74.65" width="4.20" height="4.20" fill="#3aa76a" stroke="#0b6b35" stroke-width="0.9" /><rect x="187.42" y="63.28" width="4.20" height="4.20" fill="#3aa76a" stroke="#0b6b35" stroke-width="0.9" /><rect x="221.28" y="66.30" width="25.22" height="20.91" fill="none" stroke="#0a0a0a" stroke-width="2" /><rect x="219.18" y="64.20" width="4.20" height="4.20" fill="#3aa76a" stroke="#0b6b35" stroke-width="0.9" /><rect x="244.40" y="85.11" width="4.20" height="4.20" fill="#3aa76a" stroke="#0b6b35" stroke-width="0.9" /><circle cx="275.51" cy="64.34" r="6.60" fill="none" stroke="#0a0a0a" stroke-width="1.7" stroke-dasharray="7.5 2.2" stroke-dashoffset="3"/><rect x="272.05" y="56.69" width="3.00" height="3.00" fill="#3aa76a" stroke="#0b6b35" stroke-width="0.9" /><rect x="280.29" y="63.75" width="3.00" height="3.00" fill="#3aa76a" stroke="#0b6b35" stroke-width="0.9" /><rect x="269.83" y="68.06" width="3.00" height="3.00" fill="#3aa76a" stroke="#0b6b35" stroke-width="0.9" /><polygon points="293.81,60.02 305.57,57.41 307.14,67.60 295.77,69.96" fill="none" stroke="#0a0a0a" stroke-width="1.7" stroke-linejoin="round" stroke-dasharray="9 1.8"/><rect x="297.80" y="58.00" width="3.00" height="3.00" fill="#3aa76a" stroke="#0b6b35" stroke-width="0.9" /><rect x="305.12" y="65.06" width="3.00" height="3.00" fill="#3aa76a" stroke="#0b6b35" stroke-width="0.9" /><rect x="294.92" y="67.93" width="3.00" height="3.00" fill="#3aa76a" stroke="#0b6b35" stroke-width="0.9" /><path d="M321.9,59.1 Q331.1,58.5 331.1,67.6" fill="none" stroke="#0a0a0a" stroke-width="1.7" /><polyline points="330.93,67.60 330.93,71.78" fill="none" stroke="#888" stroke-width="1.4" /><polyline points="328.57,64.34 328.57,69.56" fill="none" stroke="#3aa76a" stroke-width="0.9" /><polyline points="333.28,64.34 333.28,69.56" fill="none" stroke="#3aa76a" stroke-width="0.9" /><rect x="319.10" y="58.26" width="3.00" height="3.00" fill="#3aa76a" stroke="#0b6b35" stroke-width="0.9" /><polygon points="346.74,59.11 353.93,58.19 357.19,64.34 354.58,69.96 347.39,69.56 343.73,64.34" fill="none" stroke="#0a0a0a" stroke-width="1.7" stroke-linejoin="round" stroke-dasharray="10 2"/><rect x="349.16" y="63.10" width="3.00" height="3.00" fill="#3aa76a" stroke="#0b6b35" stroke-width="0.9" /><rect x="353.99" y="67.02" width="3.00" height="3.00" fill="#3aa76a" stroke="#0b6b35" stroke-width="0.9" /><polyline points="273.16,82.24 281.00,90.47" fill="none" stroke="#0a0a0a" stroke-width="1.8" /><circle cx="271.59" cy="82.63" r="1.90" fill="none" stroke="#888" stroke-width="1.2" /><circle cx="279.70" cy="91.13" r="2.30" fill="none" stroke="#888" stroke-width="1.3" /><ellipse cx="301.4" cy="87.2" rx="7" ry="4" fill="none" stroke="#0a0a0a" stroke-width="1.7"/><rect x="299.89" y="81.78" width="3.00" height="3.00" fill="#3aa76a" stroke="#0b6b35" stroke-width="0.9" /><rect x="294.27" y="85.71" width="3.00" height="3.00" fill="#3aa76a" stroke="#0b6b35" stroke-width="0.9" /><rect x="299.89" y="85.71" width="3.00" height="3.00" fill="#3aa76a" stroke="#0b6b35" stroke-width="0.9" /><path d="M320.6,81.7 Q330.4,82.2 331.7,92.4" fill="none" stroke="#0a0a0a" stroke-width="1.7" stroke-dasharray="4 1.6"/><rect x="319.10" y="80.22" width="3.00" height="3.00" fill="#3aa76a" stroke="#0b6b35" stroke-width="0.9" /><rect x="326.94" y="82.83" width="3.00" height="3.00" fill="#3aa76a" stroke="#0b6b35" stroke-width="0.9" /><rect x="330.21" y="90.93" width="3.00" height="3.00" fill="#3aa76a" stroke="#0b6b35" stroke-width="0.9" /><circle cx="350.66" cy="86.94" r="2.70" fill="#7ac943" stroke="#3a8a2a" stroke-width="0.8" /><polyline points="269.63,103.93 282.05,115.96" fill="none" stroke="#0a0a0a" stroke-width="1.7" stroke-dasharray="2.2 2.2"/><path d="M295.8,104.5 C303.0,103.5 304.9,107.5 301.4,109.4 S299.7,114.6 306.6,115.3" fill="none" stroke="#0a0a0a" stroke-width="1.7" /><rect x="294.27" y="102.96" width="3.00" height="3.00" fill="#3aa76a" stroke="#0b6b35" stroke-width="0.9" /><rect x="299.89" y="107.92" width="3.00" height="3.00" fill="#3aa76a" stroke="#0b6b35" stroke-width="0.9" /><rect x="305.12" y="113.80" width="3.00" height="3.00" fill="#3aa76a" stroke="#0b6b35" stroke-width="0.9" /><path d="M322.6,105.5 C334.3,100.3 336.3,113.3 327.8,115.3" fill="none" stroke="#0a0a0a" stroke-width="1.8" /><rect x="319.10" y="105.05" width="3.00" height="3.00" fill="#3aa76a" stroke="#0b6b35" stroke-width="0.9" /><rect x="324.98" y="107.92" width="3.00" height="3.00" fill="#3aa76a" stroke="#0b6b35" stroke-width="0.9" /><rect x="326.29" y="113.80" width="3.00" height="3.00" fill="#3aa76a" stroke="#0b6b35" stroke-width="0.9" /><polygon points="346.74,102.89 356.28,105.50 356.28,117.26 346.74,114.00" fill="#b4e6a0" stroke="#5a9a4a" stroke-width="0.7" stroke-linejoin="round" /><polygon points="346.74,102.89 351.31,108.12 346.74,114.00" fill="#d0f0c0" stroke="#5a9a4a" stroke-width="0.5" stroke-linejoin="round" /><g transform="translate(343.7,117.3) rotate(-45)"><path d="M0,0 L3.6,-1.6 L3.6,1.6 Z" fill="#222" /><rect x="3.60" y="-1.70" width="13.00" height="3.40" fill="#d8c820" stroke="#4a4a00" stroke-width="0.7" /><rect x="16.60" y="-1.70" width="2.40" height="3.40" fill="#e8a060" stroke="#7a4a20" stroke-width="0.5" /><path d="M19,-1.7 h1 a1.7,1.7 0 0 1 0,3.4 h-1 Z" fill="#f0b0b0" stroke="#a03030" stroke-width="0.6" /></g><path d="M380.0,58.7 Q389.0,58.7 389.0,68.2" fill="none" stroke="#0a8a1a" stroke-width="2.2" /><polyline points="375.86,58.89 378.97,58.89" fill="none" stroke="#0a0a0a" stroke-width="2.2" /><polyline points="389.03,69.06 389.03,72.07" fill="none" stroke="#0a0a0a" stroke-width="2.2" /><polygon points="386.54,58.06 390.07,58.06 390.07,61.49" fill="#b06a5a" stroke-linejoin="round" /><polyline points="401.07,69.79 408.02,64.60 414.56,71.03" fill="none" stroke="#0a0a0a" stroke-width="2.2" /><polyline points="408.02,64.60 404.18,58.38" fill="none" stroke="#8a1a10" stroke-width="1.4" /><polyline points="408.02,64.60 414.56,58.89" fill="none" stroke="#8a1a10" stroke-width="1.4" /><polygon points="405.95,59.41 406.72,61.23 408.55,62.01 406.72,62.78 405.95,64.61 405.17,62.78 403.35,62.01 405.17,61.23" fill="#ffe000" stroke="#f03010" stroke-width="0.8" stroke-linejoin="round" /><polygon points="411.65,59.72 412.42,61.55 414.25,62.32 412.42,63.09 411.65,64.92 410.88,63.09 409.05,62.32 410.88,61.55" fill="#ffe000" stroke="#f03010" stroke-width="0.8" stroke-linejoin="round" /><path d="M426.2,57.5 Q438.6,59.4 439.9,70.6" fill="none" stroke="#0a8a1a" stroke-width="2.2" /><path d="M427.2,59.9 Q431.4,66.2 437.6,70.0" fill="none" stroke="#0a0a0a" stroke-width="1" /><polyline points="378.45,81.20 386.75,84.83 386.75,94.90" fill="none" stroke="#0a8a1a" stroke-width="2.4" /><polyline points="376.06,85.56 381.56,87.95 381.56,94.90" fill="none" stroke="#0a0a0a" stroke-width="1.1" /><polyline points="404.60,86.91 407.71,93.65" fill="none" stroke="#777" stroke-width="0.8" /><polyline points="409.06,80.37 413.94,87.22" fill="none" stroke="#777" stroke-width="0.8" /><polyline points="401.28,92.62 414.25,81.20" fill="none" stroke="#0a0a0a" stroke-width="2.2" /><polyline points="404.91,89.29 411.13,83.80" fill="none" stroke="#e02010" stroke-width="2.6" /><polygon points="405.43,86.07 406.20,87.90 408.03,88.67 406.20,89.44 405.43,91.27 404.66,89.44 402.83,88.67 404.66,87.90" fill="#ffe000" stroke="#f03010" stroke-width="0.8" stroke-linejoin="round" /><polygon points="410.41,81.92 411.18,83.75 413.01,84.52 411.18,85.29 410.41,87.12 409.64,85.29 407.81,84.52 409.64,83.75" fill="#ffe000" stroke="#f03010" stroke-width="0.8" stroke-linejoin="round" /><polygon points="432.40,80.37 438.63,82.76 438.63,92.10 432.40,90.02" fill="#fbd8b8" stroke="#5a3010" stroke-width="0.8" stroke-linejoin="round" /><polygon points="428.25,81.20 434.48,83.80 434.48,93.65 428.25,91.06" fill="#fff" stroke="#555" stroke-width="0.8" stroke-linejoin="round" /><polygon points="425.14,82.76 430.85,85.35 430.85,94.69 425.14,92.10" fill="#8fd060" stroke="#2a6a10" stroke-width="1.0" stroke-linejoin="round" /><polygon points="426.39,85.35 429.50,86.70 429.50,92.62 426.39,91.16" fill="#b8e890" stroke-linejoin="round" /><polygon points="437.59,78.85 438.66,81.38 441.19,82.45 438.66,83.52 437.59,86.05 436.52,83.52 433.99,82.45 436.52,81.38" fill="#ffe000" stroke="#f03010" stroke-width="0.8" stroke-linejoin="round" /><polygon points="375.86,117.31 380.53,110.25 390.69,109.22 386.75,116.48" fill="#fff" stroke="#555" stroke-width="0.9" stroke-linejoin="round" /><polyline points="380.01,112.85 380.01,103.51 387.27,107.14 387.27,110.25" fill="none" stroke="#0a0a0a" stroke-width="0.9" /><polyline points="380.01,104.03 380.01,114.40" fill="none" stroke="#f0f000" stroke-width="1.3" /><polyline points="387.06,107.14 387.06,110.25" fill="none" stroke="#f0f000" stroke-width="1.3" /><polyline points="380.01,114.92 387.27,110.25" fill="none" stroke="#0a8a1a" stroke-width="2.2" /><polyline points="404.39,104.55 413.73,116.48" fill="none" stroke="#777" stroke-width="0.9" /><polyline points="401.28,114.61 414.25,105.38" fill="none" stroke="#0a0a0a" stroke-width="2.3" /><polygon points="408.54,106.22 409.49,108.47 411.74,109.42 409.49,110.37 408.54,112.62 407.59,110.37 405.34,109.42 407.59,108.47" fill="#ffe000" stroke="#f03010" stroke-width="0.8" stroke-linejoin="round" /><polyline points="450.87,80.99 450.87,99.36" fill="none" stroke="#9e9e9e" stroke-width="1.8" /><polyline points="480.96,80.99 480.96,99.36" fill="none" stroke="#9e9e9e" stroke-width="1.8" /><polyline points="457.31,83.90 474.94,83.90" fill="none" stroke="#9e9e9e" stroke-width="2.6" /><polygon points="452.95,83.90 459.38,78.92 459.38,88.88" fill="#9e9e9e" stroke-linejoin="round" /><polygon points="479.30,83.90 472.87,78.92 472.87,88.88" fill="#9e9e9e" stroke-linejoin="round" /><polygon points="499.13,69.26 515.41,78.60 515.41,91.05 499.13,81.71" fill="#fddcb4" stroke="#3a2410" stroke-width="1.1" stroke-linejoin="round" /><polygon points="515.41,78.60 528.90,72.38 528.90,83.78 515.41,91.05" fill="#d6a673" stroke="#3a2410" stroke-width="1.1" stroke-linejoin="round" /><polygon points="499.13,69.26 512.30,62.52 528.90,72.38 515.41,78.60" fill="#fbe2c4" stroke="#3a2410" stroke-width="1.1" stroke-linejoin="round" /><polygon points="503.48,67.71 512.30,63.25 524.75,70.30 515.93,74.76" fill="#8fe88f" stroke="#14601a" stroke-width="0.9" stroke-linejoin="round" /><polygon points="503.48,67.71 515.93,74.76 515.93,77.56 503.48,70.61" fill="#b8f5b8" stroke="#14601a" stroke-width="0.7" stroke-linejoin="round" /><polygon points="515.93,74.76 524.75,70.30 524.75,73.41 515.93,77.56" fill="#6fd06f" stroke="#14601a" stroke-width="0.7" stroke-linejoin="round" /><polygon points="553.79,60.45 568.83,68.23 568.83,79.12 553.79,71.34" fill="#e9bd8f" stroke="#3a2410" stroke-width="0.9" stroke-linejoin="round" /><polygon points="544.14,57.34 565.93,68.23 565.93,86.59 544.14,75.18" fill="#9ff09f" stroke="#14601a" stroke-width="1.0" stroke-linejoin="round" /><polygon points="543.11,65.84 557.94,73.41 557.94,84.30 543.11,76.84" fill="#fdd9b0" stroke="#3a2410" stroke-width="1.0" stroke-linejoin="round" /><polygon points="557.94,73.41 561.57,71.65 561.57,82.54 557.94,84.30" fill="#d3a26f" stroke="#3a2410" stroke-width="1.0" stroke-linejoin="round" /><polygon points="543.11,65.84 546.84,64.08 561.57,71.65 557.94,73.41" fill="#fbe2c4" stroke="#3a2410" stroke-width="1.0" stroke-linejoin="round" /><polygon points="587.50,74.45 596.84,79.12 596.84,85.34 587.50,80.67" fill="#f8b4b8" stroke="#7a2a35" stroke-width="0.9" stroke-linejoin="round" /><polygon points="596.84,79.12 610.84,72.89 610.84,79.12 596.84,85.34" fill="#f4a6ac" stroke="#7a2a35" stroke-width="0.9" stroke-linejoin="round" /><polygon points="587.50,74.45 600.47,69.26 610.84,72.89 596.84,79.12" fill="#fbc8cc" stroke="#7a2a35" stroke-width="0.9" stroke-linejoin="round" /><polygon points="584.18,70.30 599.95,64.08 613.95,70.30 613.95,83.78 599.43,90.73 584.18,83.78" fill="none" stroke="#2f6a3a" stroke-width="0.9" stroke-linejoin="round" /><polyline points="584.18,70.30 599.43,77.04 613.95,70.30" fill="none" stroke="#2f6a3a" stroke-width="0.9" /><polyline points="599.43,77.04 599.43,90.73" fill="none" stroke="#2f6a3a" stroke-width="0.9" /><defs><linearGradient id="pg" x1="0" y1="0" x2="1" y2="1"><stop offset="0" stop-color="#e2aa72"/><stop offset="1" stop-color="#c78a4a"/></linearGradient><linearGradient id="pa" x1="0" y1="1" x2="1" y2="0"><stop offset="0" stop-color="#2a9ad0"/><stop offset="0.5" stop-color="#d8f0fa"/><stop offset="1" stop-color="#2a7ab0"/></linearGradient></defs><polygon points="624.63,82.75 633.97,77.25 645.59,86.59 636.04,92.39" fill="url(#pg)" stroke="#b07a40" stroke-width="0.6" stroke-linejoin="round" /><polygon points="634.69,83.27 641.64,76.21 638.53,73.93 654.71,65.11 647.66,80.98 644.76,78.08 636.77,85.13" fill="url(#pa)" stroke="#1a6a98" stroke-width="0.8" stroke-linejoin="round" /><polygon points="675.35,73.72 689.56,79.95 689.56,91.36 675.35,84.30" fill="#fddcb4" stroke="#3a2410" stroke-width="1.1" stroke-linejoin="round" /><polygon points="689.56,79.95 700.97,75.18 700.97,86.59 689.56,91.36" fill="#e3b583" stroke="#3a2410" stroke-width="1.1" stroke-linejoin="round" /><polygon points="675.35,73.72 687.18,67.91 700.97,75.18 689.56,79.95" fill="#9aec9a" stroke="#14601a" stroke-width="1.1" stroke-linejoin="round" /><path d="M690.42,68.95L703.22,68.95M692.30,64.43L701.35,73.48M696.82,62.55L696.82,75.35M701.35,64.43L692.30,73.48" fill="none" stroke="#f09018" stroke-width="2.0" /><circle cx="696.82" cy="68.95" r="2.40" fill="#ffe820" /><polyline points="729.29,85.13 729.29,71.86" fill="none" stroke="#3a90c8" stroke-width="1.6" /><polygon points="729.29,62.52 732.61,73.72 725.97,73.72" fill="#bfe0f2" stroke="#2a6a98" stroke-width="0.7" stroke-linejoin="round" /><polyline points="729.29,85.13 737.27,78.08" fill="none" stroke="#2a9a4a" stroke-width="1.8" /><polygon points="742.77,73.41 739.35,80.98 734.68,76.21" fill="#9fe0a8" stroke="#1a7a3a" stroke-width="0.7" stroke-linejoin="round" /><polyline points="729.29,85.13 741.94,88.66" fill="none" stroke="#c03040" stroke-width="2.0" /><polygon points="751.80,91.56 739.87,91.56 742.15,85.55" fill="#f6c0c4" stroke="#b03040" stroke-width="0.7" stroke-linejoin="round" /><circle cx="729.29" cy="85.13" r="2.10" fill="#f8f070" stroke="#8a8a10" stroke-width="0.9" /><polygon points="775.65,69.26 784.99,72.38 784.99,84.51 777.73,83.27 774.10,73.93" fill="#fbd8b2" stroke="#6a4020" stroke-width="0.9" stroke-linejoin="round" /><ellipse cx="774.6" cy="78.3" rx="3.8" ry="5.2" fill="#fbd8b2" stroke="#6a4020" stroke-width="0.9"/><polyline points="775.65,69.26 778.24,75.80 784.99,72.38" fill="none" stroke="#6a4020" stroke-width="0.9" /><polyline points="778.24,75.80 777.73,83.27" fill="none" stroke="#6a4020" stroke-width="0.9" /><polygon points="815.35,79.12 827.18,84.82 827.18,92.81 815.35,86.59" fill="#fddcb4" stroke="#3a2410" stroke-width="1.1" stroke-linejoin="round" /><polygon points="827.18,84.82 844.81,76.52 844.81,84.10 827.18,92.81" fill="#ddb07c" stroke="#3a2410" stroke-width="1.1" stroke-linejoin="round" /><polygon points="815.35,79.12 831.12,72.06 844.81,76.52 827.18,84.82" fill="#fbe2c4" stroke="#3a2410" stroke-width="1.1" stroke-linejoin="round" /><polygon points="821.26,71.34 832.15,76.21 832.15,86.59 821.26,81.40" fill="#9ff09f" stroke="#14601a" stroke-width="1.1" stroke-linejoin="round" /><polygon points="832.15,76.21 842.73,71.65 842.73,82.23 832.15,86.59" fill="#6cd66c" stroke="#14601a" stroke-width="1.1" stroke-linejoin="round" /><polygon points="821.26,71.34 831.12,66.15 842.73,71.65 832.15,76.21" fill="#8fe88f" stroke="#14601a" stroke-width="1.1" stroke-linejoin="round" /><polygon points="864.31,63.56 871.57,66.88 871.57,71.65 864.31,68.23" fill="#f29aa4" stroke="#7a3040" stroke-width="0.7" stroke-linejoin="round" /><polygon points="871.57,66.88 877.59,64.08 877.59,68.74 871.57,71.65" fill="#e6808c" stroke="#7a3040" stroke-width="0.7" stroke-linejoin="round" /><polygon points="864.31,60.24 871.57,63.56 871.57,65.84 864.31,62.52" fill="#fddcb4" stroke="#3a2410" stroke-width="0.7" stroke-linejoin="round" /><polygon points="871.57,63.56 877.59,60.65 877.59,63.04 871.57,65.84" fill="#dcab78" stroke="#3a2410" stroke-width="0.7" stroke-linejoin="round" /><polygon points="864.31,60.24 870.53,56.51 877.59,60.65 871.57,63.56" fill="#fbe2c4" stroke="#3a2410" stroke-width="0.7" stroke-linejoin="round" /><polyline points="863.79,63.14 871.57,66.67 878.00,63.56" fill="none" stroke="#28a8e8" stroke-width="1.5" /><polygon points="863.48,86.90 872.61,91.36 872.61,94.47 863.48,90.01" fill="#fddcb4" stroke="#3a2410" stroke-width="0.7" stroke-linejoin="round" /><polygon points="872.61,91.36 878.62,88.24 878.62,91.36 872.61,94.47" fill="#dcab78" stroke="#3a2410" stroke-width="0.7" stroke-linejoin="round" /><polygon points="865.14,82.75 869.29,84.82 869.29,87.93 865.14,85.86" fill="#fddcb4" stroke="#3a2410" stroke-width="0.7" stroke-linejoin="round" /><polygon points="869.29,84.82 874.16,82.44 874.16,85.55 869.29,87.93" fill="#dcab78" stroke="#3a2410" stroke-width="0.7" stroke-linejoin="round" /><polygon points="865.14,82.75 869.70,79.32 874.16,82.44 869.29,84.82" fill="#fbe2c4" stroke="#3a2410" stroke-width="0.7" stroke-linejoin="round" /><polygon points="868.46,88.45 874.47,85.55 878.62,87.62 872.61,90.53" fill="#a8d8f8" stroke="#2a6aa8" stroke-width="0.8" stroke-linejoin="round" /><polyline points="863.27,86.59 868.46,88.66" fill="none" stroke="#18a028" stroke-width="1.8" /><polygon points="863.48,110.23 871.57,114.38 871.57,117.29 863.48,113.14" fill="#fff" stroke="#15154a" stroke-width="0.9" stroke-linejoin="round" /><polygon points="871.57,114.38 878.62,111.06 878.62,113.97 871.57,117.29" fill="#e8c8a0" stroke="#15154a" stroke-width="0.9" stroke-linejoin="round" /><polygon points="863.48,110.23 870.53,107.33 878.62,111.06 871.57,114.38" fill="#fff" stroke="#15154a" stroke-width="0.9" stroke-linejoin="round" /><polyline points="868.46,108.68 868.46,102.45 874.68,105.26 874.68,108.68" fill="none" stroke="#222" stroke-width="0.8" /><polyline points="868.46,102.97 868.46,114.38" fill="none" stroke="#28a8e8" stroke-width="1.2" /><polyline points="867.94,114.38 867.94,110.23 874.16,108.68" fill="none" stroke="#18a028" stroke-width="1.6" /><polygon points="895.22,62.52 902.89,65.84 902.89,72.06 895.22,68.54" fill="#fddcb4" stroke="#3a2410" stroke-width="0.7" stroke-linejoin="round" /><polygon points="902.89,65.84 910.47,62.52 910.47,68.74 902.89,72.06" fill="#dcab78" stroke="#3a2410" stroke-width="0.7" stroke-linejoin="round" /><polygon points="895.22,62.52 902.69,57.54 910.47,62.52 902.89,65.84" fill="#fbe2c4" stroke="#3a2410" stroke-width="0.7" stroke-linejoin="round" /><polyline points="895.22,63.14 902.89,66.67 910.47,63.14" fill="none" stroke="#fff" stroke-width="1.3" /><polyline points="903.10,66.67 903.10,72.69" fill="none" stroke="#fff" stroke-width="1.3" /><polygon points="895.22,85.86 903.72,90.01 903.72,95.51 895.22,91.05" fill="#fddcb4" stroke="#3a2410" stroke-width="0.7" stroke-linejoin="round" /><polygon points="903.72,90.01 910.47,86.59 910.47,92.08 903.72,95.51" fill="#dcab78" stroke="#3a2410" stroke-width="0.7" stroke-linejoin="round" /><polygon points="895.22,85.86 902.69,80.67 910.47,86.59 903.72,90.01" fill="#fbe2c4" stroke="#3a2410" stroke-width="0.7" stroke-linejoin="round" /><polyline points="896.98,81.71 908.70,86.38" fill="none" stroke="#e81818" stroke-width="1.6" /><polyline points="894.91,86.90 905.80,91.05" fill="none" stroke="#e81818" stroke-width="1.6" /><polygon points="895.94,109.40 902.89,112.52 902.89,116.67 895.94,113.55" fill="#fddcb4" stroke="#3a2410" stroke-width="0.7" stroke-linejoin="round" /><polygon points="902.89,112.52 909.95,109.40 909.95,113.55 902.89,116.67" fill="#dcab78" stroke="#3a2410" stroke-width="0.7" stroke-linejoin="round" /><polygon points="895.94,108.68 902.89,105.26 909.95,108.68 902.89,111.79" fill="#fbe2c4" stroke="#e81818" stroke-width="1.6" stroke-linejoin="round" /><polygon points="1016.47,77.37 1020.63,68.78 1031.29,68.78 1034.89,77.37" fill="#8fe08f" stroke="#7a4a3a" stroke-width="0.9" stroke-linejoin="round" /><polygon points="1016.47,77.37 1034.89,77.37 1031.29,85.68 1024.78,87.89 1020.21,85.12" fill="#f2a8a8" stroke="#7a4a3a" stroke-width="0.9" stroke-linejoin="round" /><polygon points="1020.63,68.78 1024.78,66.84 1028.94,67.39 1031.29,68.78 1027.55,70.86 1023.40,70.44" fill="#f2c89a" stroke="#7a4a3a" stroke-width="0.8" stroke-linejoin="round" /><polyline points="1023.40,70.44 1020.63,77.78 1024.78,87.89" fill="none" stroke="#7a4a3a" stroke-width="0.7" /><polyline points="1027.55,70.86 1029.63,77.78 1028.25,86.79" fill="none" stroke="#7a4a3a" stroke-width="0.7" /><polyline points="1016.47,77.37 1020.63,78.48 1029.63,78.48 1034.89,77.37" fill="none" stroke="#7a4a3a" stroke-width="0.7" /><defs><linearGradient id="cg" x1="0" y1="0" x2="1" y2="0"><stop offset="0" stop-color="#f4f4f4"/><stop offset="0.5" stop-color="#a8a8a8"/><stop offset="1" stop-color="#e8e8e8"/></linearGradient></defs><rect x="1070.50" y="69.47" width="29.78" height="6.23" fill="#dedede" stroke="#777" stroke-width="0.7" /><polygon points="1072.30,66.01 1079.22,66.01 1079.22,75.70 1076.04,90.25 1072.30,79.17" fill="url(#cg)" stroke="#666" stroke-width="0.7" stroke-linejoin="round" /><polygon points="1084.35,66.01 1090.58,66.01 1090.58,79.17 1085.04,90.25 1084.35,75.70" fill="url(#cg)" stroke="#666" stroke-width="0.7" stroke-linejoin="round" /><circle cx="1091.97" cy="72.66" r="5.60" fill="#fff" stroke="#555" stroke-width="0.9" /><polyline points="1090.58,71.83 1095.01,75.70" fill="none" stroke="#1a1ae0" stroke-width="1.1" /><rect x="1123.55" y="68.50" width="16.21" height="3.05" fill="#e8e8f8" stroke="#111" stroke-width="1.2" /><rect x="1125.21" y="84.29" width="12.74" height="3.60" fill="#c8c8c8" stroke="#777" stroke-width="0.7" /><defs><radialGradient id="wg" cx="0.4" cy="0.35" r="0.7"><stop offset="0" stop-color="#eef2ff"/><stop offset="1" stop-color="#88a0e0"/></radialGradient></defs><circle cx="1131.45" cy="79.58" r="7.20" fill="url(#wg)" stroke="#111" stroke-width="1.1" /><polyline points="1131.45,79.58 1134.91,74.60" fill="none" stroke="#e81848" stroke-width="1.2" /><polygon points="1172.31,71.27 1178.13,74.32 1178.13,77.72 1172.31,74.67" fill="#fddcb4" stroke="#3a2410" stroke-width="0.8" stroke-linejoin="round" /><polygon points="1178.13,74.32 1185.89,69.47 1185.89,72.87 1178.13,77.72" fill="#dcab78" stroke="#3a2410" stroke-width="0.8" stroke-linejoin="round" /><polygon points="1172.31,71.27 1179.93,66.29 1185.89,69.47 1178.13,74.32" fill="#fbe2c4" stroke="#3a2410" stroke-width="0.8" stroke-linejoin="round" /><polygon points="1179.24,81.94 1186.16,85.40 1186.16,88.80 1179.24,85.34" fill="#fddcb4" stroke="#3a2410" stroke-width="0.8" stroke-linejoin="round" /><polygon points="1186.16,85.40 1194.75,80.14 1194.75,83.54 1186.16,88.80" fill="#dcab78" stroke="#3a2410" stroke-width="0.8" stroke-linejoin="round" /><polygon points="1179.24,81.94 1187.82,76.40 1194.75,80.14 1186.16,85.40" fill="#fbe2c4" stroke="#3a2410" stroke-width="0.8" stroke-linejoin="round" /><defs><linearGradient id="bg" x1="0" y1="0" x2="0" y2="1"><stop offset="0" stop-color="#fdfdfd"/><stop offset="1" stop-color="#e2e2e2"/></linearGradient></defs><rect x="1224.26" y="61.16" width="20.09" height="25.35" fill="url(#bg)" stroke="#c4c4c4" stroke-width="0.7" /><polygon points="1222.87,57.42 1245.45,57.97 1244.34,62.96 1224.26,61.85" fill="#b8b8b8" stroke="#8a8a8a" stroke-width="0.6" stroke-linejoin="round" /><polyline points="1223.56,58.39 1245.03,59.08" fill="none" stroke="#f4f4f4" stroke-width="1.0" /><path d="M1227.7,65.7H1241.8M1227.7,67.7H1241.8M1227.7,69.6H1241.8M1227.7,71.5H1241.8M1227.7,73.5H1241.8M1227.7,75.4H1241.8M1227.7,77.4H1241.8M1227.7,79.3H1241.8M1227.7,81.2H1241.8" fill="none" stroke="#8a8a8a" stroke-width="0.9" stroke-dasharray="1.2 0.5"/><polyline points="1229.80,84.29 1239.49,84.29" fill="none" stroke="#666" stroke-width="1.0" /><polygon points="1273.24,64.62 1285.70,64.62 1291.52,70.86 1291.52,88.17 1273.24,88.17" fill="#f8f8fc" stroke="#9aa4c4" stroke-width="0.9" stroke-linejoin="round" /><polygon points="1285.70,64.62 1291.52,70.86 1285.70,70.86" fill="#dfe4f2" stroke="#9aa4c4" stroke-width="0.7" stroke-linejoin="round" /><path d="M1275.3,66.7 h3.3 v3.6 h3.6 v3.3 h-3.6 v3.6 h-3.3 v-3.6 h-3.6 v-3.3 h3.6 Z" fill="#3fbf6f" stroke="#0f6a35" stroke-width="0.8" transform="translate(-1.2,2.2)"/><polygon points="1277.39,83.32 1287.78,87.48 1287.78,91.08 1277.39,86.92" fill="#fddcb4" stroke="#3a2410" stroke-width="0.8" stroke-linejoin="round" /><polygon points="1287.78,87.48 1295.68,83.32 1295.68,86.92 1287.78,91.08" fill="#dcab78" stroke="#3a2410" stroke-width="0.8" stroke-linejoin="round" /><polygon points="1277.39,83.32 1285.01,77.78 1295.68,83.32 1287.78,87.48" fill="#fbe2c4" stroke="#3a2410" stroke-width="0.8" stroke-linejoin="round" /><defs><radialGradient id="sp" cx="0.35" cy="0.35" r="0.8"><stop offset="0" stop-color="#a8e0a0"/><stop offset="1" stop-color="#3a8a3a"/></radialGradient><linearGradient id="cy" x1="0" y1="0" x2="1" y2="0"><stop offset="0" stop-color="#5ab05a"/><stop offset="0.45" stop-color="#c8f0c0"/><stop offset="1" stop-color="#3a8a3a"/></linearGradient></defs><circle cx="1332.11" cy="68.09" r="8.40" fill="url(#sp)" stroke="#2a6a2a" stroke-width="0.7" /><polygon points="1314.52,64.35 1320.34,60.74 1330.03,63.51 1330.03,75.01 1324.21,77.78 1314.52,75.43" fill="#8fd48f" stroke="#2a6a2a" stroke-width="0.8" stroke-linejoin="round" /><polygon points="1314.52,64.35 1324.21,66.70 1324.21,77.78 1314.52,75.43" fill="#a8e4a8" stroke="#2a6a2a" stroke-width="0.6" stroke-linejoin="round" /><polygon points="1314.52,64.35 1320.34,60.74 1330.03,63.51 1324.21,66.70" fill="#c0f0c0" stroke="#2a6a2a" stroke-width="0.6" stroke-linejoin="round" /><path d="M1322.8,70.9 V82.6 A7.4,2.6 0 0 0 1337.7,82.6 V70.9 Z" fill="url(#cy)" stroke="#2a6a2a" stroke-width="0.8" /><ellipse cx="1330.2" cy="70.9" rx="7.4" ry="3.2" fill="#c4ecc0" stroke="#2a6a2a" stroke-width="0.8"/><circle cx="1367.43" cy="76.40" r="2.60" fill="#6ab04a" stroke="#2a6a2a" stroke-width="0.9" /><polygon points="1367.43,69.20 1365.53,71.80 1369.33,71.80" fill="#3a9a4a" stroke-linejoin="round" /><polygon points="1367.43,83.60 1369.33,81.00 1365.53,81.00" fill="#3a9a4a" stroke-linejoin="round" /><polygon points="1360.23,76.40 1362.83,74.50 1362.83,78.30" fill="#3a9a4a" stroke-linejoin="round" /><polygon points="1374.63,76.40 1372.03,78.30 1372.03,74.50" fill="#3a9a4a" stroke-linejoin="round" /><polygon points="1396.25,71.83 1411.76,67.39 1411.76,81.52 1396.25,86.09" fill="#fdfdfd" stroke="#111" stroke-width="1.2" stroke-linejoin="round" /><polyline points="1430.46,68.09 1449.85,86.09" fill="none" stroke="#222" stroke-width="1.1" stroke-dasharray="5 1.6 1.6 1.6"/><defs><linearGradient id="lb" x1="0" y1="0" x2="0" y2="1"><stop offset="0" stop-color="#dcb891"/><stop offset="1" stop-color="#c59f76"/></linearGradient></defs><polygon points="1472.43,61.16 1476.17,53.54 1494.18,53.54 1497.92,61.16" fill="#e3c19c" stroke="#b8986f" stroke-width="0.6" stroke-linejoin="round" /><rect x="1472.43" y="61.16" width="25.49" height="18.01" fill="url(#lb)" stroke="#b08058" stroke-width="0.6" /><polygon points="1482.13,53.54 1488.23,53.54 1489.06,61.16 1481.30,61.16" fill="#eed4b4" stroke-linejoin="round" /><rect x="1482.13" y="61.16" width="6.10" height="1.80" fill="#e8ccaa" /><rect x="1480.75" y="70.86" width="8.87" height="5.96" fill="#f4f0ea" stroke="#8a7a6a" stroke-width="0.5" /><rect x="1482.41" y="72.24" width="5.54" height="3.19" fill="#5a5a5a" /><polygon points="1492.80,62.54 1495.15,64.90 1493.77,64.90 1493.77,67.12 1491.83,67.12 1491.83,64.90 1490.44,64.90" fill="#4a3a2a" stroke-linejoin="round" /><path d="M1474.4,63.0H1480.3M1474.4,64.6H1480.3M1474.4,66.3H1480.3" fill="none" stroke="#b89878" stroke-width="0.7" /><defs><linearGradient id="fl1519" x1="0" y1="0" x2="1" y2="1"><stop offset="0" stop-color="#a79cf6"/><stop offset="1" stop-color="#6a5cd8"/></linearGradient></defs><path d="M1519.1,57.2 h25.6 v25.8 h-22.6 l-3,-3 Z" fill="url(#fl1519)" stroke="#5a4cc0" stroke-width="0.6" /><rect x="1523.70" y="57.20" width="16.40" height="13.20" fill="#fdfdf8" /><rect x="1524.70" y="59.80" width="14.40" height="1.20" fill="#f6b810" /><rect x="1524.70" y="62.00" width="14.40" height="1.20" fill="#f8c840" /><rect x="1524.70" y="64.20" width="14.40" height="0.90" fill="#d8b8a8" /><rect x="1524.70" y="66.40" width="14.40" height="0.90" fill="#d8c8c8" /><rect x="1541.70" y="59.20" width="1.60" height="2.60" fill="#e8e4ff" /><rect x="1525.70" y="74.60" width="12.80" height="8.40" fill="#f2f0fc" /><rect x="1527.50" y="76.00" width="2.60" height="6.20" fill="#5a3a9a" /><g transform="translate(1525.4,63.7) rotate(42.2)"><path d="M0,0 L4.6,-2.1 L4.6,2.1 Z" fill="#4a3a10" stroke="#222" stroke-width="0.5" /><rect x="4.60" y="-2.20" width="19.50" height="4.40" fill="#f4e410" stroke="#5a5a00" stroke-width="0.7" /><rect x="4.60" y="-0.90" width="19.50" height="1.30" fill="#fffa90" /><rect x="24.10" y="-2.20" width="3.20" height="4.40" fill="#e89858" stroke="#7a4a20" stroke-width="0.6" /><path d="M27.3,-2.2 h1.2 a2.2,2.2 0 0 1 0,4.4 h-1.2 Z" fill="#c85050" stroke="#7a2020" stroke-width="0.6" /></g><defs><linearGradient id="fl1560" x1="0" y1="0" x2="1" y2="1"><stop offset="0" stop-color="#a79cf6"/><stop offset="1" stop-color="#6a5cd8"/></linearGradient></defs><path d="M1560.2,57.2 h25.6 v25.8 h-22.6 l-3,-3 Z" fill="url(#fl1560)" stroke="#5a4cc0" stroke-width="0.6" /><rect x="1564.80" y="57.20" width="16.40" height="13.20" fill="#fdfdf8" /><rect x="1565.80" y="59.80" width="14.40" height="1.20" fill="#f6b810" /><rect x="1565.80" y="62.00" width="14.40" height="1.20" fill="#f8c840" /><rect x="1565.80" y="64.20" width="14.40" height="0.90" fill="#d8b8a8" /><rect x="1565.80" y="66.40" width="14.40" height="0.90" fill="#d8c8c8" /><rect x="1582.80" y="59.20" width="1.60" height="2.60" fill="#e8e4ff" /><rect x="1566.80" y="74.60" width="12.80" height="8.40" fill="#f2f0fc" /><rect x="1568.60" y="76.00" width="2.60" height="6.20" fill="#5a3a9a" /><g transform="translate(1566.5,63.7) rotate(42.2)"><path d="M0,0 L4.6,-2.1 L4.6,2.1 Z" fill="#4a3a10" stroke="#222" stroke-width="0.5" /><rect x="4.60" y="-2.20" width="19.50" height="4.40" fill="#f4e410" stroke="#5a5a00" stroke-width="0.7" /><rect x="4.60" y="-0.90" width="19.50" height="1.30" fill="#fffa90" /><rect x="24.10" y="-2.20" width="3.20" height="4.40" fill="#e89858" stroke="#7a4a20" stroke-width="0.6" /><path d="M27.3,-2.2 h1.2 a2.2,2.2 0 0 1 0,4.4 h-1.2 Z" fill="#c85050" stroke="#7a2020" stroke-width="0.6" /></g><rect x="1600.00" y="52.20" width="40.00" height="39.70" fill="#00702c" /><polygon points="1626.10,59.00 1631.27,61.60 1626.10,64.20 1620.93,61.60" fill="#fff" stroke="#00702c" stroke-width="0.7" stroke-linejoin="round" /><polygon points="1620.93,61.60 1626.10,64.20 1626.10,70.60 1620.93,68.00" fill="#fff" stroke="#00702c" stroke-width="0.7" stroke-linejoin="round" /><polygon points="1626.10,64.20 1631.27,61.60 1631.27,68.00 1626.10,70.60" fill="#fff" stroke="#00702c" stroke-width="0.7" stroke-linejoin="round" /><polygon points="1620.30,69.30 1625.47,71.90 1620.30,74.50 1615.13,71.90" fill="#fff" stroke="#00702c" stroke-width="0.7" stroke-linejoin="round" /><polygon points="1615.13,71.90 1620.30,74.50 1620.30,80.90 1615.13,78.30" fill="#fff" stroke="#00702c" stroke-width="0.7" stroke-linejoin="round" /><polygon points="1620.30,74.50 1625.47,71.90 1625.47,78.30 1620.30,80.90" fill="#fff" stroke="#00702c" stroke-width="0.7" stroke-linejoin="round" /><polygon points="1620.30,62.90 1625.47,65.50 1620.30,68.10 1615.13,65.50" fill="#fff" stroke="#00702c" stroke-width="0.7" stroke-linejoin="round" /><polygon points="1615.13,65.50 1620.30,68.10 1620.30,74.50 1615.13,71.90" fill="#fff" stroke="#00702c" stroke-width="0.7" stroke-linejoin="round" /><polygon points="1620.30,68.10 1625.47,65.50 1625.47,71.90 1620.30,74.50" fill="#fff" stroke="#00702c" stroke-width="0.7" stroke-linejoin="round" /><polygon points="1614.20,72.80 1619.37,75.40 1614.20,78.00 1609.03,75.40" fill="#fff" stroke="#00702c" stroke-width="0.7" stroke-linejoin="round" /><polygon points="1609.03,75.40 1614.20,78.00 1614.20,84.40 1609.03,81.80" fill="#fff" stroke="#00702c" stroke-width="0.7" stroke-linejoin="round" /><polygon points="1614.20,78.00 1619.37,75.40 1619.37,81.80 1614.20,84.40" fill="#fff" stroke="#00702c" stroke-width="0.7" stroke-linejoin="round" /><defs><linearGradient id="dg" x1="0" y1="0" x2="1" y2="1"><stop offset="0" stop-color="#fafbff"/><stop offset="1" stop-color="#dfe4f4"/></linearGradient></defs><polygon points="1661.30,57.62 1675.20,57.62 1682.52,65.98 1682.52,85.43 1661.30,85.43" fill="url(#dg)" stroke="#8f9cc4" stroke-width="0.9" stroke-linejoin="round" /><polygon points="1675.20,57.62 1682.52,65.98 1675.20,65.98" fill="#eef1fa" stroke="#8f9cc4" stroke-width="0.7" stroke-linejoin="round" /><circle cx="1665.48" cy="70.48" r="1.30" fill="#fff" stroke="#8a96be" stroke-width="0.7" /><polyline points="1668.30,70.48 1679.07,70.48" fill="none" stroke="#9aa4c8" stroke-width="1.5" /><circle cx="1665.48" cy="75.71" r="1.30" fill="#fff" stroke="#8a96be" stroke-width="0.7" /><polyline points="1668.30,75.71 1679.07,75.71" fill="none" stroke="#9aa4c8" stroke-width="1.5" /><circle cx="1665.48" cy="80.62" r="1.30" fill="#fff" stroke="#8a96be" stroke-width="0.7" /><polyline points="1668.30,80.62 1679.07,80.62" fill="none" stroke="#9aa4c8" stroke-width="1.5" /><polygon points="14.90,170.50 14.90,177.10 8.30,177.10" fill="#8a8a8a" stroke="#5a5a5a" stroke-width="0.7" stroke-linejoin="round" /><rect x="21.50" y="167.50" width="12.00" height="12.00" fill="#fff" stroke="#8e8f8f" stroke-width="1" /><rect x="23.00" y="169.00" width="9.00" height="9.00" fill="#fff" stroke="#d9dadb" stroke-width="1" /><path d="M24.1,173.5 l2.4,2.6 l4.4,-5.4" fill="none" stroke="#111" stroke-width="2.0" stroke-linejoin="miter"/><polygon points="38.00,165.40 45.00,165.40 48.60,169.00 48.60,177.00 38.00,177.00" fill="#f6f6f6" stroke="#8a94b4" stroke-width="0.7" stroke-linejoin="round" /><polygon points="45.00,165.40 48.60,169.00 45.00,169.00" fill="#fff" stroke="#5a6a9a" stroke-width="0.6" stroke-linejoin="round" /><polygon points="43.00,172.00 47.00,169.80 51.60,171.80 51.60,178.00 47.60,180.00 43.00,178.00" fill="#8fd0e8" stroke="#2a5a7a" stroke-width="0.6" stroke-linejoin="round" /><polygon points="43.00,172.00 47.60,174.00 47.60,180.00 43.00,178.00" fill="#b4e4f4" stroke="#2a5a7a" stroke-width="0.5" stroke-linejoin="round" /><polygon points="47.60,174.00 51.60,171.80 51.60,178.00 47.60,180.00" fill="#5ab0d0" stroke="#2a5a7a" stroke-width="0.5" stroke-linejoin="round" /><polygon points="37.40,176.60 42.00,178.60 42.00,180.60 37.40,178.60" fill="#fddcb4" stroke="#3a2410" stroke-width="0.6" stroke-linejoin="round" /><polygon points="42.00,178.60 46.00,176.40 46.00,178.40 42.00,180.60" fill="#dcab78" stroke="#3a2410" stroke-width="0.6" stroke-linejoin="round" /><polygon points="37.40,176.60 41.20,174.60 46.00,176.40 42.00,178.60" fill="#fbe2c4" stroke="#3a2410" stroke-width="0.6" stroke-linejoin="round" /><polygon points="33.70,186.50 33.70,193.10 27.10,193.10" fill="#8a8a8a" stroke="#5a5a5a" stroke-width="0.7" stroke-linejoin="round" /><rect x="40.50" y="183.50" width="12.00" height="12.00" fill="#fff" stroke="#8e8f8f" stroke-width="1" /><rect x="42.00" y="185.00" width="9.00" height="9.00" fill="#fff" stroke="#d9dadb" stroke-width="1" /><path d="M43.1,189.5 l2.4,2.6 l4.4,-5.4" fill="none" stroke="#111" stroke-width="2.0" stroke-linejoin="miter"/><polygon points="61.00,184.80 65.60,182.00 71.00,184.40 71.00,193.00 66.60,195.40 61.00,193.00" fill="#8fd0e8" stroke="#2a5a7a" stroke-width="0.6" stroke-linejoin="round" /><polygon points="61.00,184.80 66.60,187.20 66.60,195.40 61.00,193.00" fill="#b4e4f4" stroke="#2a5a7a" stroke-width="0.6" stroke-linejoin="round" /><polygon points="66.60,187.20 71.00,184.40 71.00,193.00 66.60,195.40" fill="#5ab0d0" stroke="#2a5a7a" stroke-width="0.6" stroke-linejoin="round" /><polygon points="56.80,191.60 62.20,194.00 62.20,196.60 56.80,194.20" fill="#fddcb4" stroke="#3a2410" stroke-width="0.6" stroke-linejoin="round" /><polygon points="62.20,194.00 67.00,191.40 67.00,194.00 62.20,196.60" fill="#dcab78" stroke="#3a2410" stroke-width="0.6" stroke-linejoin="round" /><polygon points="56.80,191.60 61.40,189.00 67.00,191.40 62.20,194.00" fill="#fbe2c4" stroke="#3a2410" stroke-width="0.6" stroke-linejoin="round" /><polygon points="33.70,234.50 33.70,241.10 27.10,241.10" fill="#8a8a8a" stroke="#5a5a5a" stroke-width="0.7" stroke-linejoin="round" /><rect x="40.50" y="231.50" width="12.00" height="12.00" fill="#fff" stroke="#8e8f8f" stroke-width="1" /><rect x="42.00" y="233.00" width="9.00" height="9.00" fill="#fff" stroke="#d9dadb" stroke-width="1" /><path d="M43.1,237.5 l2.4,2.6 l4.4,-5.4" fill="none" stroke="#111" stroke-width="2.0" stroke-linejoin="miter"/><polygon points="61.00,232.80 65.60,230.00 71.00,232.40 71.00,241.00 66.60,243.40 61.00,241.00" fill="#8fd0e8" stroke="#2a5a7a" stroke-width="0.6" stroke-linejoin="round" /><polygon points="61.00,232.80 66.60,235.20 66.60,243.40 61.00,241.00" fill="#b4e4f4" stroke="#2a5a7a" stroke-width="0.6" stroke-linejoin="round" /><polygon points="66.60,235.20 71.00,232.40 71.00,241.00 66.60,243.40" fill="#5ab0d0" stroke="#2a5a7a" stroke-width="0.6" stroke-linejoin="round" /><polygon points="56.80,239.60 62.20,242.00 62.20,244.60 56.80,242.20" fill="#fddcb4" stroke="#3a2410" stroke-width="0.6" stroke-linejoin="round" /><polygon points="62.20,242.00 67.00,239.40 67.00,242.00 62.20,244.60" fill="#dcab78" stroke="#3a2410" stroke-width="0.6" stroke-linejoin="round" /><polygon points="56.80,239.60 61.40,237.00 67.00,239.40 62.20,242.00" fill="#fbe2c4" stroke="#3a2410" stroke-width="0.6" stroke-linejoin="round" /><polygon points="47.20,201.60 51.80,205.60 47.20,209.60" fill="#fff" stroke="#5a5a5a" stroke-width="0.9" stroke-linejoin="round" /><rect x="59.50" y="199.50" width="12.00" height="12.00" fill="#fff" stroke="#8e8f8f" stroke-width="1" /><rect x="61.00" y="201.00" width="9.00" height="9.00" fill="#fff" stroke="#d9dadb" stroke-width="1" /><path d="M62.1,205.5 l2.4,2.6 l4.4,-5.4" fill="none" stroke="#111" stroke-width="2.0" stroke-linejoin="miter"/><path d="M75.8,201.0 l5.4,-3 l5,2.2 v3.2 l4,1.8 v4.6 l-5.6,3.2 l-8.8,-4.2 Z" fill="#fddcb4" stroke="#3a2410" stroke-width="1.0" stroke-linejoin="round"/><path d="M75.8,201.0 l5.2,2.4 l5,-2.8 M81.0,203.4 v3.4 l4,1.8 l4.2,-2.2 M85.0,208.6 v4.6" fill="none" stroke="#3a2410" stroke-width="0.8" /><path d="M75.8,201.0 l5.2,2.4 v3.4 l4,1.8 v4.6 l-8.8,-4.2 Z" fill="#f8cfa2" stroke="none" stroke-width="1" /><path d="M86.0,207.4 l4.2,-2.2 v4.6 l-5.4,3 v-4.6 Z" fill="#e0b07e" stroke="#3a2410" stroke-width="0.7" /><path d="M75.8,201.0 l5.4,-3 l5,2.2 v3.2 l4,1.8 v4.6 l-5.6,3.2 l-8.8,-4.2 Z" fill="none" stroke="#3a2410" stroke-width="1.1" stroke-linejoin="round"/><path d="M75.8,201.0 l5.2,2.4 l5,-2.8 M81.0,203.4 v3.4 l4,1.8 M85.0,208.6 v4.6" fill="none" stroke="#3a2410" stroke-width="0.8" /><polygon points="47.20,217.60 51.80,221.60 47.20,225.60" fill="#fff" stroke="#5a5a5a" stroke-width="0.9" stroke-linejoin="round" /><rect x="59.50" y="215.50" width="12.00" height="12.00" fill="#fff" stroke="#8e8f8f" stroke-width="1" /><rect x="61.00" y="217.00" width="9.00" height="9.00" fill="#fff" stroke="#d9dadb" stroke-width="1" /><path d="M62.1,221.5 l2.4,2.6 l4.4,-5.4" fill="none" stroke="#111" stroke-width="2.0" stroke-linejoin="miter"/><path d="M75.8,217.0 l5.4,-3 l5,2.2 v3.2 l4,1.8 v4.6 l-5.6,3.2 l-8.8,-4.2 Z" fill="#fddcb4" stroke="#3a2410" stroke-width="1.0" stroke-linejoin="round"/><path d="M75.8,217.0 l5.2,2.4 l5,-2.8 M81.0,219.4 v3.4 l4,1.8 l4.2,-2.2 M85.0,224.6 v4.6" fill="none" stroke="#3a2410" stroke-width="0.8" /><path d="M75.8,217.0 l5.2,2.4 v3.4 l4,1.8 v4.6 l-8.8,-4.2 Z" fill="#f8cfa2" stroke="none" stroke-width="1" /><path d="M86.0,223.4 l4.2,-2.2 v4.6 l-5.4,3 v-4.6 Z" fill="#e0b07e" stroke="#3a2410" stroke-width="0.7" /><path d="M75.8,217.0 l5.4,-3 l5,2.2 v3.2 l4,1.8 v4.6 l-5.6,3.2 l-8.8,-4.2 Z" fill="none" stroke="#3a2410" stroke-width="1.1" stroke-linejoin="round"/><path d="M75.8,217.0 l5.2,2.4 l5,-2.8 M81.0,219.4 v3.4 l4,1.8 M85.0,224.6 v4.6" fill="none" stroke="#3a2410" stroke-width="0.8" /><polygon points="47.20,249.60 51.80,253.60 47.20,257.60" fill="#fff" stroke="#5a5a5a" stroke-width="0.9" stroke-linejoin="round" /><rect x="59.50" y="247.50" width="12.00" height="12.00" fill="#fff" stroke="#8e8f8f" stroke-width="1" /><rect x="61.00" y="249.00" width="9.00" height="9.00" fill="#fff" stroke="#d9dadb" stroke-width="1" /><path d="M62.1,253.5 l2.4,2.6 l4.4,-5.4" fill="none" stroke="#111" stroke-width="2.0" stroke-linejoin="miter"/><polygon points="80.00,248.80 84.60,246.00 90.00,248.40 90.00,257.00 85.60,259.40 80.00,257.00" fill="#8fd0e8" stroke="#2a5a7a" stroke-width="0.6" stroke-linejoin="round" /><polygon points="80.00,248.80 85.60,251.20 85.60,259.40 80.00,257.00" fill="#b4e4f4" stroke="#2a5a7a" stroke-width="0.6" stroke-linejoin="round" /><polygon points="85.60,251.20 90.00,248.40 90.00,257.00 85.60,259.40" fill="#5ab0d0" stroke="#2a5a7a" stroke-width="0.6" stroke-linejoin="round" /><polygon points="75.80,255.60 81.20,258.00 81.20,260.60 75.80,258.20" fill="#fddcb4" stroke="#3a2410" stroke-width="0.6" stroke-linejoin="round" /><polygon points="81.20,258.00 86.00,255.40 86.00,258.00 81.20,260.60" fill="#dcab78" stroke="#3a2410" stroke-width="0.6" stroke-linejoin="round" /><polygon points="75.80,255.60 80.40,253.00 86.00,255.40 81.20,258.00" fill="#fbe2c4" stroke="#3a2410" stroke-width="0.6" stroke-linejoin="round" /><polygon points="47.20,265.60 51.80,269.60 47.20,273.60" fill="#fff" stroke="#5a5a5a" stroke-width="0.9" stroke-linejoin="round" /><rect x="59.50" y="263.50" width="12.00" height="12.00" fill="#fff" stroke="#8e8f8f" stroke-width="1" /><rect x="61.00" y="265.00" width="9.00" height="9.00" fill="#fff" stroke="#d9dadb" stroke-width="1" /><path d="M62.1,269.5 l2.4,2.6 l4.4,-5.4" fill="none" stroke="#111" stroke-width="2.0" stroke-linejoin="miter"/><path d="M75.8,265.0 l5.4,-3 l5,2.2 v3.2 l4,1.8 v4.6 l-5.6,3.2 l-8.8,-4.2 Z" fill="#fddcb4" stroke="#3a2410" stroke-width="1.0" stroke-linejoin="round"/><path d="M75.8,265.0 l5.2,2.4 l5,-2.8 M81.0,267.4 v3.4 l4,1.8 l4.2,-2.2 M85.0,272.6 v4.6" fill="none" stroke="#3a2410" stroke-width="0.8" /><path d="M75.8,265.0 l5.2,2.4 v3.4 l4,1.8 v4.6 l-8.8,-4.2 Z" fill="#f8cfa2" stroke="none" stroke-width="1" /><path d="M86.0,271.4 l4.2,-2.2 v4.6 l-5.4,3 v-4.6 Z" fill="#e0b07e" stroke="#3a2410" stroke-width="0.7" /><path d="M75.8,265.0 l5.4,-3 l5,2.2 v3.2 l4,1.8 v4.6 l-5.6,3.2 l-8.8,-4.2 Z" fill="none" stroke="#3a2410" stroke-width="1.1" stroke-linejoin="round"/><path d="M75.8,265.0 l5.2,2.4 l5,-2.8 M81.0,267.4 v3.4 l4,1.8 M85.0,272.6 v4.6" fill="none" stroke="#3a2410" stroke-width="0.8" /><polygon points="47.20,281.60 51.80,285.60 47.20,289.60" fill="#fff" stroke="#5a5a5a" stroke-width="0.9" stroke-linejoin="round" /><rect x="59.50" y="279.50" width="12.00" height="12.00" fill="#fff" stroke="#8e8f8f" stroke-width="1" /><rect x="61.00" y="281.00" width="9.00" height="9.00" fill="#fff" stroke="#d9dadb" stroke-width="1" /><path d="M62.1,285.5 l2.4,2.6 l4.4,-5.4" fill="none" stroke="#111" stroke-width="2.0" stroke-linejoin="miter"/><path d="M75.8,281.0 l5.4,-3 l5,2.2 v3.2 l4,1.8 v4.6 l-5.6,3.2 l-8.8,-4.2 Z" fill="#fddcb4" stroke="#3a2410" stroke-width="1.0" stroke-linejoin="round"/><path d="M75.8,281.0 l5.2,2.4 l5,-2.8 M81.0,283.4 v3.4 l4,1.8 l4.2,-2.2 M85.0,288.6 v4.6" fill="none" stroke="#3a2410" stroke-width="0.8" /><path d="M75.8,281.0 l5.2,2.4 v3.4 l4,1.8 v4.6 l-8.8,-4.2 Z" fill="#f8cfa2" stroke="none" stroke-width="1" /><path d="M86.0,287.4 l4.2,-2.2 v4.6 l-5.4,3 v-4.6 Z" fill="#e0b07e" stroke="#3a2410" stroke-width="0.7" /><path d="M75.8,281.0 l5.4,-3 l5,2.2 v3.2 l4,1.8 v4.6 l-5.6,3.2 l-8.8,-4.2 Z" fill="none" stroke="#3a2410" stroke-width="1.1" stroke-linejoin="round"/><path d="M75.8,281.0 l5.2,2.4 l5,-2.8 M81.0,283.4 v3.4 l4,1.8 M85.0,288.6 v4.6" fill="none" stroke="#3a2410" stroke-width="0.8" /><polygon points="47.20,297.60 51.80,301.60 47.20,305.60" fill="#fff" stroke="#5a5a5a" stroke-width="0.9" stroke-linejoin="round" /><rect x="59.50" y="295.50" width="12.00" height="12.00" fill="#fff" stroke="#8e8f8f" stroke-width="1" /><rect x="61.00" y="297.00" width="9.00" height="9.00" fill="#fff" stroke="#d9dadb" stroke-width="1" /><path d="M62.1,301.5 l2.4,2.6 l4.4,-5.4" fill="none" stroke="#111" stroke-width="2.0" stroke-linejoin="miter"/><path d="M75.8,297.0 l5.4,-3 l5,2.2 v3.2 l4,1.8 v4.6 l-5.6,3.2 l-8.8,-4.2 Z" fill="#fddcb4" stroke="#3a2410" stroke-width="1.0" stroke-linejoin="round"/><path d="M75.8,297.0 l5.2,2.4 l5,-2.8 M81.0,299.4 v3.4 l4,1.8 l4.2,-2.2 M85.0,304.6 v4.6" fill="none" stroke="#3a2410" stroke-width="0.8" /><path d="M75.8,297.0 l5.2,2.4 v3.4 l4,1.8 v4.6 l-8.8,-4.2 Z" fill="#f8cfa2" stroke="none" stroke-width="1" /><path d="M86.0,303.4 l4.2,-2.2 v4.6 l-5.4,3 v-4.6 Z" fill="#e0b07e" stroke="#3a2410" stroke-width="0.7" /><path d="M75.8,297.0 l5.4,-3 l5,2.2 v3.2 l4,1.8 v4.6 l-5.6,3.2 l-8.8,-4.2 Z" fill="none" stroke="#3a2410" stroke-width="1.1" stroke-linejoin="round"/><path d="M75.8,297.0 l5.2,2.4 l5,-2.8 M81.0,299.4 v3.4 l4,1.8 M85.0,304.6 v4.6" fill="none" stroke="#3a2410" stroke-width="0.8" /></svg>
</body></html>
